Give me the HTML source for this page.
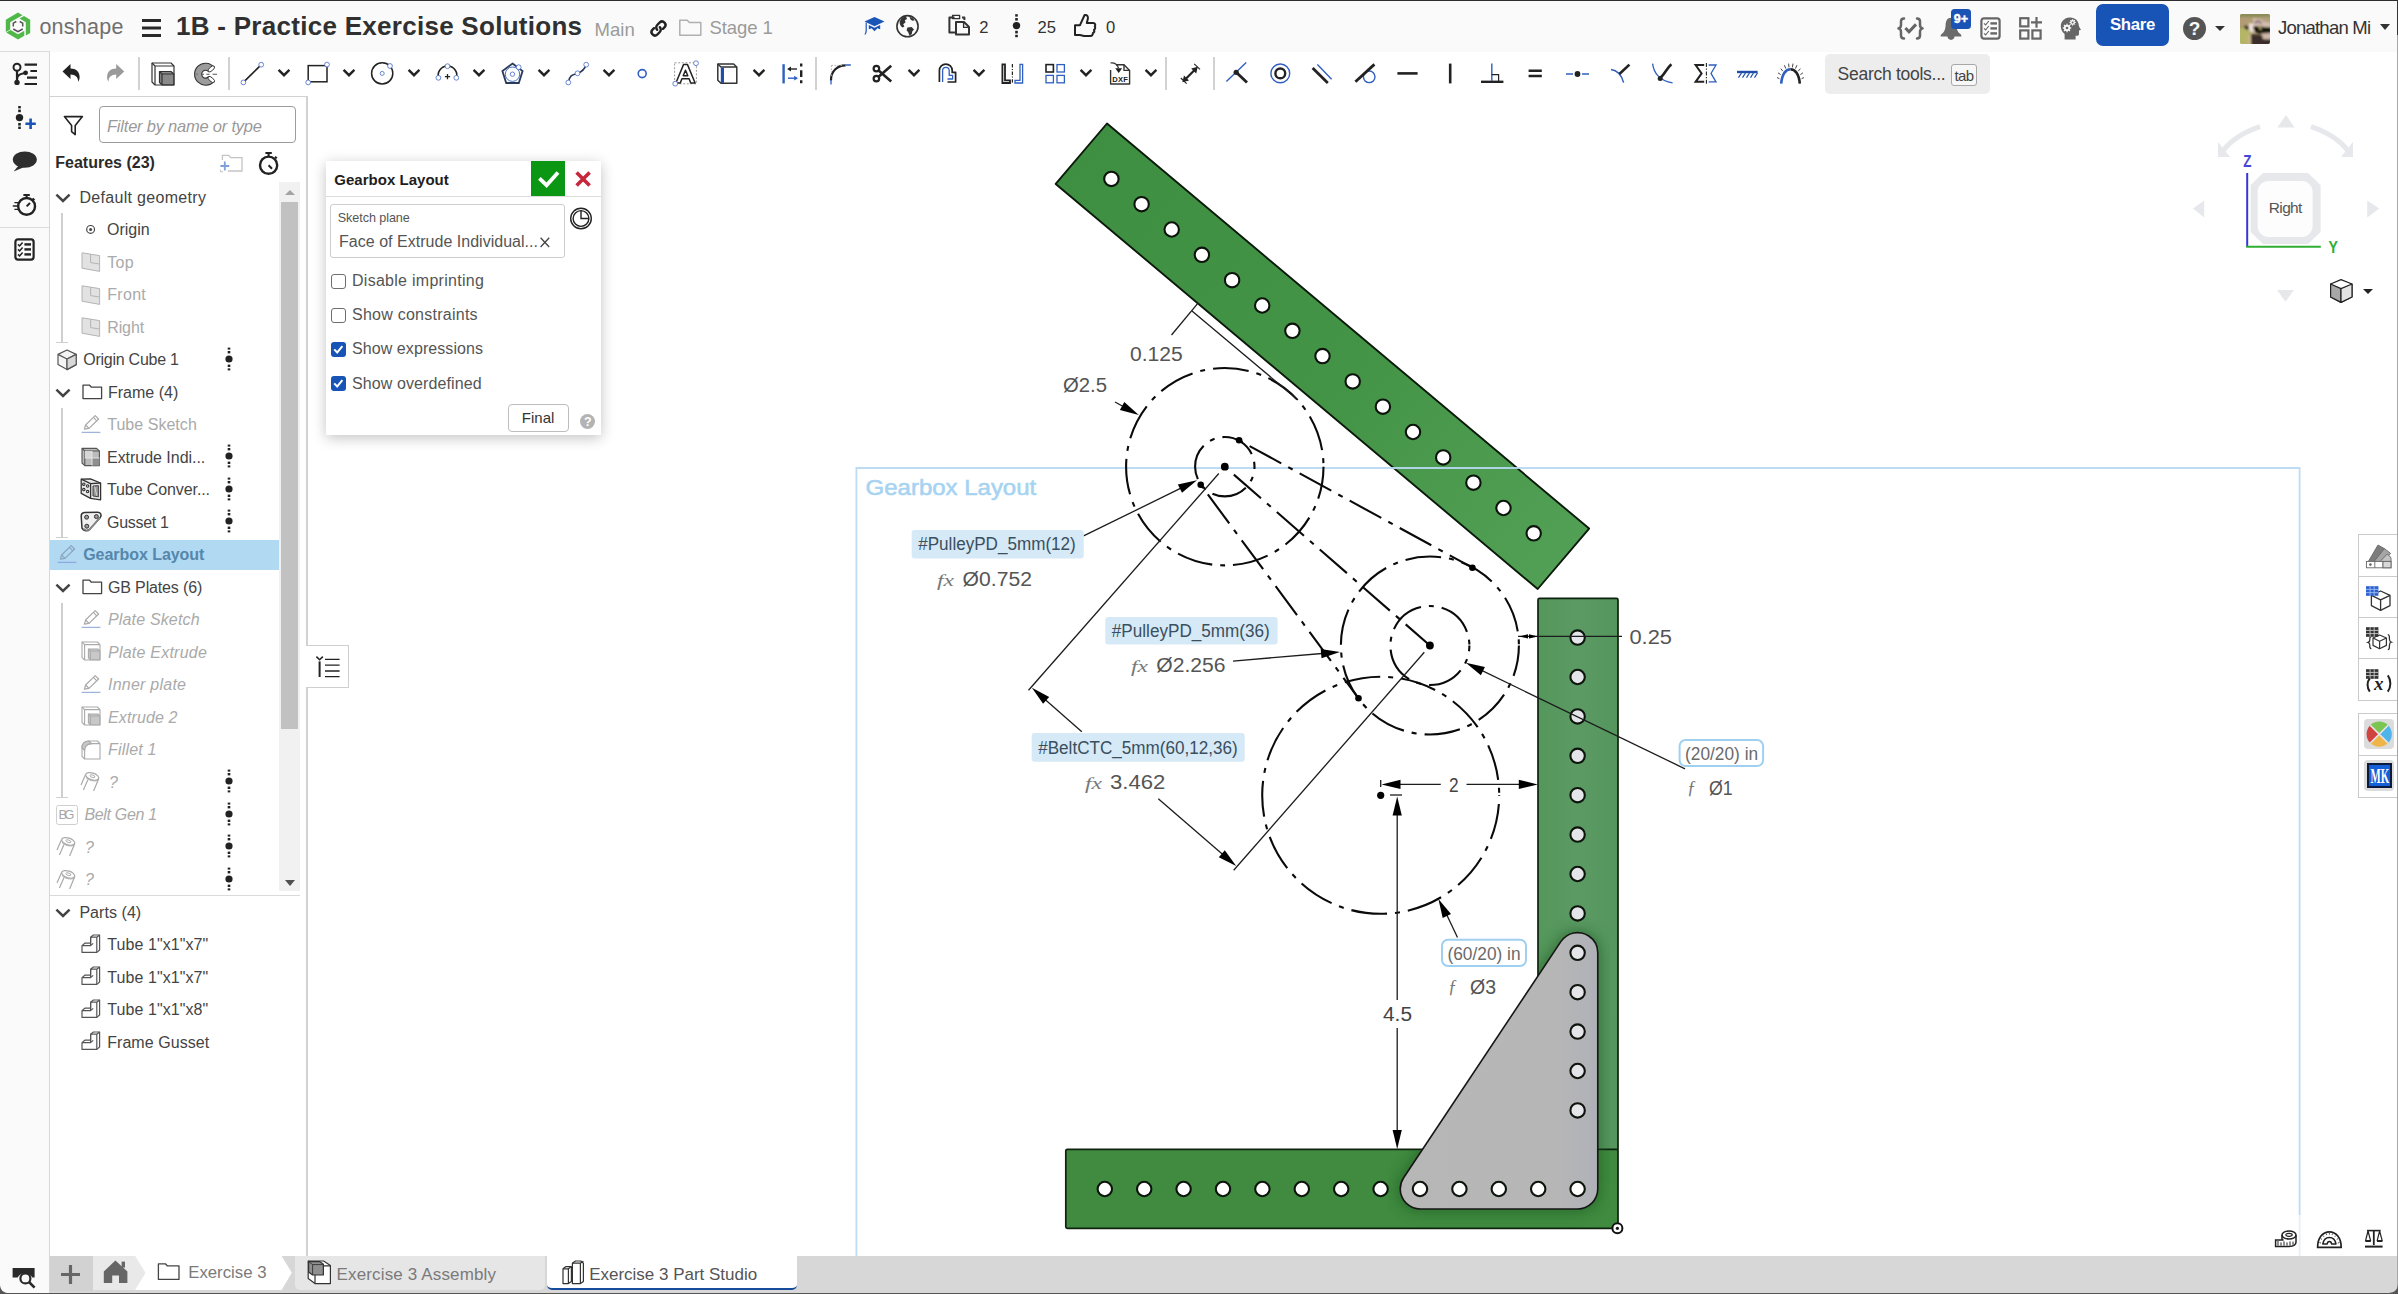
<!DOCTYPE html>
<html><head><meta charset="utf-8"><title>Onshape</title>
<style>
html,body{margin:0;padding:0;}
body{width:2398px;height:1294px;overflow:hidden;background:#fff;font-family:"Liberation Sans",sans-serif;position:relative;color:#444;}
#cv{position:absolute;left:0;top:0;z-index:0;}
.abs{position:absolute;}
svg{display:block;overflow:visible;}
.t{margin:0;padding:0;}
.fit{text-align:justify;text-align-last:justify;}

</style></head>
<body>
<svg id="cv" width="2398" height="1294" viewBox="0 0 2398 1294">
<defs>
<linearGradient id="gd" gradientUnits="userSpaceOnUse" x1="1080" y1="150" x2="1570" y2="560"><stop offset="0" stop-color="#3f8f42"/><stop offset="0.55" stop-color="#449447"/><stop offset="1" stop-color="#52a055"/></linearGradient>
<linearGradient id="gv" x1="0" y1="0" x2="1" y2="0"><stop offset="0" stop-color="#54975b"/><stop offset="0.5" stop-color="#5c9a64"/><stop offset="1" stop-color="#54965d"/></linearGradient>
<linearGradient id="gg" x1="0" y1="0" x2="1" y2="0"><stop offset="0" stop-color="#b7b7b7"/><stop offset="0.7" stop-color="#b5b5b7"/><stop offset="1" stop-color="#aeb0b6"/></linearGradient>
<linearGradient id="gg2" gradientUnits="userSpaceOnUse" x1="1400" y1="0" x2="1598" y2="0"><stop offset="0" stop-color="#b7b7b7"/><stop offset="0.8" stop-color="#b6b6b7"/><stop offset="1" stop-color="#b0b1b7"/></linearGradient>
<filter id="sh" x="-20%" y="-20%" width="140%" height="140%"><feGaussianBlur stdDeviation="7"/></filter>
</defs>
<polygon points="1107,123.5 1589.1,528.6 1537.7,589 1055.7,183.9" fill="url(#gd)" stroke="#0b1a0b" stroke-width="1.9" stroke-linejoin="round"/>
<circle cx="1111.4" cy="178.9" r="7.2" fill="#fff" stroke="#0c140c" stroke-width="2.1"/>
<circle cx="1141.6" cy="204.2" r="7.2" fill="#fff" stroke="#0c140c" stroke-width="2.1"/>
<circle cx="1171.7" cy="229.5" r="7.2" fill="#fff" stroke="#0c140c" stroke-width="2.1"/>
<circle cx="1201.9" cy="254.8" r="7.2" fill="#fff" stroke="#0c140c" stroke-width="2.1"/>
<circle cx="1232.1" cy="280.2" r="7.2" fill="#fff" stroke="#0c140c" stroke-width="2.1"/>
<circle cx="1262.2" cy="305.5" r="7.2" fill="#fff" stroke="#0c140c" stroke-width="2.1"/>
<circle cx="1292.4" cy="330.8" r="7.2" fill="#fff" stroke="#0c140c" stroke-width="2.1"/>
<circle cx="1322.5" cy="356.1" r="7.2" fill="#fff" stroke="#0c140c" stroke-width="2.1"/>
<circle cx="1352.7" cy="381.4" r="7.2" fill="#fff" stroke="#0c140c" stroke-width="2.1"/>
<circle cx="1382.9" cy="406.7" r="7.2" fill="#fff" stroke="#0c140c" stroke-width="2.1"/>
<circle cx="1413" cy="432" r="7.2" fill="#fff" stroke="#0c140c" stroke-width="2.1"/>
<circle cx="1443.2" cy="457.4" r="7.2" fill="#fff" stroke="#0c140c" stroke-width="2.1"/>
<circle cx="1473.4" cy="482.7" r="7.2" fill="#fff" stroke="#0c140c" stroke-width="2.1"/>
<circle cx="1503.5" cy="508" r="7.2" fill="#fff" stroke="#0c140c" stroke-width="2.1"/>
<circle cx="1533.7" cy="533.3" r="7.2" fill="#fff" stroke="#0c140c" stroke-width="2.1"/>
<rect x="1538" y="598.4" width="80" height="552" fill="url(#gv)" stroke="#0e220e" stroke-width="1.7" rx="1.5"/>
<rect x="1065.8" y="1149.3" width="552.2" height="79" fill="#408b40" stroke="#0e220e" stroke-width="1.7" rx="1.5"/>
<clipPath id="ct"><rect x="1539" y="599" width="78" height="551"/><rect x="1067" y="1150.3" width="550" height="77"/></clipPath>
<g clip-path="url(#ct)"><polygon points="1577.6,952.8 1577.6,1188.9 1420.4,1188.9" fill="#1f5a22" stroke="#1f5a22" stroke-width="46" stroke-linejoin="round" filter="url(#sh)" opacity="0.62"/></g>
<circle cx="1577.6" cy="637.6" r="7.2" fill="#e3e5e8" stroke="#0c140c" stroke-width="2.1"/>
<circle cx="1577.6" cy="677" r="7.2" fill="#e3e5e8" stroke="#0c140c" stroke-width="2.1"/>
<circle cx="1577.6" cy="716.4" r="7.2" fill="#e3e5e8" stroke="#0c140c" stroke-width="2.1"/>
<circle cx="1577.6" cy="755.8" r="7.2" fill="#e3e5e8" stroke="#0c140c" stroke-width="2.1"/>
<circle cx="1577.6" cy="795.2" r="7.2" fill="#e3e5e8" stroke="#0c140c" stroke-width="2.1"/>
<circle cx="1577.6" cy="834.6" r="7.2" fill="#e3e5e8" stroke="#0c140c" stroke-width="2.1"/>
<circle cx="1577.6" cy="874" r="7.2" fill="#e3e5e8" stroke="#0c140c" stroke-width="2.1"/>
<circle cx="1577.6" cy="913.4" r="7.2" fill="#e3e5e8" stroke="#0c140c" stroke-width="2.1"/>
<circle cx="1380.6" cy="1189" r="7.2" fill="#fff" stroke="#0c140c" stroke-width="2.1"/>
<circle cx="1341.2" cy="1189" r="7.2" fill="#fff" stroke="#0c140c" stroke-width="2.1"/>
<circle cx="1301.8" cy="1189" r="7.2" fill="#fff" stroke="#0c140c" stroke-width="2.1"/>
<circle cx="1262.4" cy="1189" r="7.2" fill="#fff" stroke="#0c140c" stroke-width="2.1"/>
<circle cx="1223" cy="1189" r="7.2" fill="#fff" stroke="#0c140c" stroke-width="2.1"/>
<circle cx="1183.6" cy="1189" r="7.2" fill="#fff" stroke="#0c140c" stroke-width="2.1"/>
<circle cx="1144.2" cy="1189" r="7.2" fill="#fff" stroke="#0c140c" stroke-width="2.1"/>
<circle cx="1104.8" cy="1189" r="7.2" fill="#fff" stroke="#0c140c" stroke-width="2.1"/>
<polygon points="1577.6,952.8 1577.6,1188.9 1420.4,1188.9" fill="#161616" stroke="#161616" stroke-width="41.9" stroke-linejoin="round"/>
<polygon points="1577.6,952.8 1577.6,1188.9 1420.4,1188.9" fill="url(#gg2)" stroke="url(#gg2)" stroke-width="38.7" stroke-linejoin="round"/>
<circle cx="1577.6" cy="952.8" r="7.2" fill="#e3e5e8" stroke="#0c140c" stroke-width="2.1"/>
<circle cx="1577.6" cy="992.2" r="7.2" fill="#e3e5e8" stroke="#0c140c" stroke-width="2.1"/>
<circle cx="1577.6" cy="1031.6" r="7.2" fill="#e3e5e8" stroke="#0c140c" stroke-width="2.1"/>
<circle cx="1577.6" cy="1071" r="7.2" fill="#e3e5e8" stroke="#0c140c" stroke-width="2.1"/>
<circle cx="1577.6" cy="1110.4" r="7.2" fill="#e3e5e8" stroke="#0c140c" stroke-width="2.1"/>
<circle cx="1577.6" cy="1189" r="7.2" fill="#fff" stroke="#0c140c" stroke-width="2.1"/>
<circle cx="1538.2" cy="1189" r="7.2" fill="#fff" stroke="#0c140c" stroke-width="2.1"/>
<circle cx="1498.8" cy="1189" r="7.2" fill="#fff" stroke="#0c140c" stroke-width="2.1"/>
<circle cx="1459.4" cy="1189" r="7.2" fill="#fff" stroke="#0c140c" stroke-width="2.1"/>
<circle cx="1420" cy="1189" r="7.2" fill="#fff" stroke="#0c140c" stroke-width="2.1"/>
<circle cx="1617.4" cy="1228.3" r="5" fill="#fff" stroke="#111" stroke-width="2"/><circle cx="1617.4" cy="1228.3" r="1.6" fill="#111"/>
<path d="M856.4,1256 V468 H2299.6 V1215" fill="none" stroke="#b7d9f2" stroke-width="1.8" opacity="0.92"/><path d="M2299.6,1215 V1256" fill="none" stroke="#b7d9f2" stroke-width="1.8" opacity="0.4"/>
<g fill="none" stroke="#0a0a0a" stroke-width="2.1" stroke-dasharray="36 8 5 8">
<circle cx="1224.8" cy="466.7" r="98.7" stroke-dashoffset="3.5"/>
<circle cx="1224.8" cy="466.7" r="29.7" stroke-dashoffset="33.7"/>
<circle cx="1429.9" cy="645.5" r="89" stroke-dashoffset="5"/>
<circle cx="1429.9" cy="645.5" r="39.5" stroke-dashoffset="30.2"/>
<circle cx="1380.7" cy="795.3" r="118.5" stroke-dashoffset="48.3"/>
<path d="M1239.1,440.3 L1472.4,567.7" stroke-dashoffset="45"/>
<path d="M1200.7,484.8 L1358.5,698.2" stroke-dashoffset="45"/>
<path d="M1224.8,466.7 L1429.9,645.5" stroke-dashoffset="45"/>
</g>
<g fill="#000">
<circle cx="1224.8" cy="466.7" r="3.9"/>
<circle cx="1429.9" cy="645.5" r="3.9"/>
<circle cx="1380.7" cy="795.3" r="3.6"/>
<circle cx="1239.1" cy="440.3" r="3.3"/>
<circle cx="1200.7" cy="484.8" r="3.3"/>
<circle cx="1472.4" cy="567.7" r="3.3"/>
<circle cx="1358.5" cy="698.2" r="3.3"/>
</g>
<g fill="none" stroke="#1c1c1c" stroke-width="1.3">
<path d="M1198,303.2 L1171.5,335"/>
<path d="M1192,311 L1298,400"/>
<path d="M1115,402 L1130,410.2"/>
<path d="M1083.6,535.9 L1185,486.2"/>
<path d="M1218.8,473.5 L1028.5,690.3"/>
<path d="M1424.3,652.3 L1233.7,870.3"/>
<path d="M1081.8,731.7 L1040,695"/>
<path d="M1158.3,798.8 L1228,859"/>
<path d="M1233,661.1 L1328,653"/>
<path d="M1518,636.4 L1622,636.4"/>
<path d="M1685,768.8 L1477,668.2"/>
<path d="M1395,784.4 L1440.8,784.4"/>
<path d="M1466.5,784.4 L1525,784.4"/>
<path d="M1380.7,780 L1380.7,787"/>
<path d="M1397.2,810 L1397.2,1000"/>
<path d="M1397.2,1028 L1397.2,1136"/>
<path d="M1390,795 L1402,795"/>
<path d="M1457.5,937.5 L1444,909"/>
</g>
<g fill="#000">
<polygon points="1138.8,415 1119.9,409.9 1124.3,401.9"/>
<polygon points="1197,480.3 1182,492.8 1177.9,484.5"/>
<polygon points="1031.9,687.8 1049.2,696.9 1043.1,703.8"/>
<polygon points="1236.2,866.1 1218.8,857.2 1224.8,850.2"/>
<polygon points="1340,652 1321.5,658.2 1320.7,649"/>
<polygon points="1465.8,662.8 1484.9,666.9 1480.9,675.2"/>
<polygon points="1381.5,784.4 1400.5,779.8 1400.5,789"/>
<polygon points="1537.8,784.4 1518.8,789 1518.8,779.8"/>
<polygon points="1397.2,796.5 1401.8,815.5 1392.6,815.5"/>
<polygon points="1397.2,1149 1392.6,1130 1401.8,1130"/>
<polygon points="1438.4,899 1451,914 1442.7,918.1"/>
<polygon points="1519,636.4 1528,634.2 1528,638.6"/>
<polygon points="1538,636.4 1529,638.6 1529,634.2"/>
</g>
<g font-family="Liberation Sans, sans-serif">
<rect x="911.7" y="530" width="172" height="28.4" rx="3" fill="#d6e9f6"/>
<text x="918.2" y="550.4" font-size="17.5" fill="#3a4f60" textLength="157.6" lengthAdjust="spacingAndGlyphs">#PulleyPD_5mm(12)</text>
<rect x="1105.3" y="616.9" width="172.3" height="27.5" rx="3" fill="#d6e9f6"/>
<text x="1111.8" y="636.9" font-size="17.5" fill="#3a4f60" textLength="158" lengthAdjust="spacingAndGlyphs">#PulleyPD_5mm(36)</text>
<rect x="1031.7" y="733" width="213" height="28.8" rx="3" fill="#d6e9f6"/>
<text x="1038.2" y="753.6" font-size="17.5" fill="#3a4f60" textLength="199.4" lengthAdjust="spacingAndGlyphs">#BeltCTC_5mm(60,12,36)</text>
<rect x="1679.6" y="740" width="83.5" height="26.1" rx="6" fill="#fff" stroke="#9fd0f0" stroke-width="2"/>
<text x="1685.1" y="759.6" font-size="18.5" fill="#6a6a6a" textLength="73" lengthAdjust="spacingAndGlyphs">(20/20) in</text>
<rect x="1442" y="939.8" width="84" height="26.2" rx="6" fill="#fff" stroke="#9fd0f0" stroke-width="2"/>
<text x="1447.5" y="959.5" font-size="18.5" fill="#6a6a6a" textLength="73" lengthAdjust="spacingAndGlyphs">(60/20) in</text>
<text x="1130" y="360.7" font-size="20.5" fill="#555" textLength="52.7" lengthAdjust="spacingAndGlyphs">0.125</text>
<text x="1063" y="392" font-size="20.5" fill="#555" textLength="44" lengthAdjust="spacingAndGlyphs">&#216;2.5</text>
<text x="937" y="586" font-size="17" font-style="italic" font-family="Liberation Serif, serif" fill="#777" textLength="17" lengthAdjust="spacingAndGlyphs">fx</text>
<text x="962.6" y="586" font-size="20.5" fill="#555" textLength="69.3" lengthAdjust="spacingAndGlyphs">&#216;0.752</text>
<text x="1131" y="672" font-size="17" font-style="italic" font-family="Liberation Serif, serif" fill="#777" textLength="17" lengthAdjust="spacingAndGlyphs">fx</text>
<text x="1156.3" y="672" font-size="20.5" fill="#555" textLength="69.2" lengthAdjust="spacingAndGlyphs">&#216;2.256</text>
<text x="1085" y="788.5" font-size="17" font-style="italic" font-family="Liberation Serif, serif" fill="#777" textLength="17" lengthAdjust="spacingAndGlyphs">fx</text>
<text x="1110" y="788.5" font-size="20.5" fill="#555" textLength="55.3" lengthAdjust="spacingAndGlyphs">3.462</text>
<text x="1629.4" y="644.2" font-size="20.5" fill="#555" textLength="42.6" lengthAdjust="spacingAndGlyphs">0.25</text>
<text x="1687" y="794" font-size="18" font-style="italic" font-family="Liberation Serif, serif" fill="#777">&#402;</text>
<text x="1709" y="795" font-size="20.5" fill="#555" textLength="23.7" lengthAdjust="spacingAndGlyphs">&#216;1</text>
<text x="1448" y="993" font-size="18" font-style="italic" font-family="Liberation Serif, serif" fill="#777">&#402;</text>
<text x="1470" y="994" font-size="20.5" fill="#555" textLength="26" lengthAdjust="spacingAndGlyphs">&#216;3</text>
<text x="1449" y="792" font-size="20.5" fill="#444" textLength="9.6" lengthAdjust="spacingAndGlyphs">2</text>
<text x="1383" y="1020.6" font-size="20.5" fill="#444" textLength="29" lengthAdjust="spacingAndGlyphs">4.5</text>
<text x="865.6" y="495" font-size="21.6" fill="#a6d3f1" stroke="#a6d3f1" stroke-width="0.55" textLength="170.6" lengthAdjust="spacingAndGlyphs">Gearbox Layout</text>
</g>
</svg>
<div class="abs" style="left:0;top:0;width:2398px;height:52px;background:#fafafa;"></div>
<svg class="abs" style="left:5px;top:12px" width="26" height="28" viewBox="0 0 26 28" ><g fill="#4fb848"><polygon points="13,0.6 17.5,3.2 5.2,10.3 5.2,17.5 0.8,20 0.8,7.7"/><polygon points="25.2,7.7 25.2,21 20.8,23.5 20.8,10.2 14.5,6.6 19,4.1"/><polygon points="13,27.4 1.2,20.6 5.6,18.1 13,22.3 19.3,18.7 19.3,23.8"/></g><g fill="none" stroke="#555" stroke-width="1.5"><path d="M8.3,14.5V11.2L11.3,9.5"/><path d="M14.7,9.5L17.7,11.2V14.5"/><path d="M17.7,17L13,19.7L8.3,17" stroke="#5a4a60"/></g></svg>
<div class="abs t " style="left:39.4px;top:14.85px;font-size:21.5px;line-height:24.70px;color:#707070;font-weight:normal;white-space:nowrap;letter-spacing:0.252px;">onshape</div>
<div class="abs" style="left:141.6px;top:18.8px;width:19.8px;height:3.5px;background:#2a2a2a;box-shadow:0 7.5px 0 #2a2a2a,0 15px 0 #2a2a2a"></div>
<div class="abs t " style="left:176px;top:12.10px;font-size:26px;line-height:29.87px;color:#303030;font-weight:bold;white-space:nowrap;letter-spacing:0.279px;">1B - Practice Exercise Solutions</div>
<div class="abs t " style="left:594.5px;top:19.21px;font-size:18.5px;line-height:21.26px;color:#9a9a9a;font-weight:normal;white-space:nowrap;letter-spacing:0.068px;">Main</div>
<svg class="abs" style="left:649px;top:19px" width="19" height="19" viewBox="0 0 19 19" ><g fill="none" stroke="#222" stroke-width="2.4" stroke-linecap="round"><path d="M8.2,10.8 a3.4,3.4 0 0 1 0,-4.8 l2.6,-2.6 a3.4,3.4 0 0 1 4.8,4.8 l-1.6,1.6"/><path d="M10.8,8.2 a3.4,3.4 0 0 1 0,4.8 l-2.6,2.6 a3.4,3.4 0 0 1 -4.8,-4.8 l1.6,-1.6"/></g></svg>
<svg class="abs" style="left:678px;top:18px" width="25" height="19" viewBox="0 0 25 19" ><path d="M1.8,2.2 H9.2 L11.4,4.6 H22.8 V17.2 H1.8 Z" fill="none" stroke="#b0b0b0" stroke-width="1.5" stroke-linejoin="round"/></svg>
<div class="abs t " style="left:709.4px;top:17.01px;font-size:18.5px;line-height:21.26px;color:#9a9a9a;font-weight:normal;white-space:nowrap;letter-spacing:-0.078px;">Stage 1</div>
<svg class="abs" style="left:864px;top:16px" width="21" height="20" viewBox="0 0 21 20" ><g fill="#1a55b8"><polygon points="10.5,1 20.5,5.6 10.5,10.2 0.5,5.6"/><path d="M4.8,9 L10.5,11.7 L16.2,9 V13.3 L13.4,12.2 L10.5,15.2 L7.6,12.2 L4.8,13.3 Z"/><path d="M1.6,6.5 h1.2 v8 c0,1.5 -0.4,3 -1.4,4 h-1 c0.8,-1.3 1.2,-2.6 1.2,-4 z"/></g></svg>
<svg class="abs" style="left:895px;top:14px" width="25" height="25" viewBox="0 0 25 25" ><circle cx="12.5" cy="12.2" r="10.6" fill="none" stroke="#333" stroke-width="1.6"/><path d="M6.5,4.2 C8,3 9.5,2.6 11,2.4 L12,5 L9.8,6.2 L10.6,8.2 L8.2,10.2 L9.4,12.4 L7.6,13.4 C5.6,12.6 4.4,10 4.6,7.6 Z M12.4,13.4 L16.6,13 L19,15.6 L17.2,17.6 L16.8,20.2 L14.4,21.6 L13.2,18.2 L11.6,16.2 Z M14.5,2.8 C16.5,3.2 18.5,4.6 19.8,6.2 L17.2,6.8 L15.4,5.2 Z" fill="#333"/></svg>
<svg class="abs" style="left:947px;top:14px" width="24" height="22" viewBox="0 0 24 22" ><g fill="none" stroke="#333" stroke-width="2" stroke-linejoin="round"><path d="M7.5,3.4 H2.4 V18.4 H8"/><path d="M5.6,1.4 H12.6 V4.6 H5.6 Z" stroke-width="1.4"/><path d="M15,3.4 H17.4 V6"/><path d="M9,8 H17 L22,13 V20.6 H9 Z"/><path d="M16.6,8.4 V13.4 H21.6" stroke-width="1.4"/></g></svg>
<div class="abs t " style="left:979.3px;top:18.26px;font-size:16.6px;line-height:19.07px;color:#333;font-weight:normal;white-space:nowrap;">2</div>
<svg class="abs" style="left:1011px;top:13px" width="11" height="26" viewBox="0 0 11 26" ><g fill="#222"><rect x="4.2" y="1.2" width="2.6" height="2.4"/><rect x="4.2" y="5" width="2.6" height="2.6"/><circle cx="5.5" cy="12.6" r="3.7"/><rect x="4.2" y="17.8" width="2.6" height="2.6"/><rect x="4.2" y="21.8" width="2.6" height="2.4"/></g></svg>
<div class="abs t " style="left:1037.6px;top:18.26px;font-size:16.6px;line-height:19.07px;color:#333;font-weight:normal;white-space:nowrap;">25</div>
<svg class="abs" style="left:1073px;top:13px" width="24" height="25" viewBox="0 0 24 25" ><path d="M2,12.2 H7 L11.6,2 C14.4,1.6 15.4,3.6 14.8,6 L13.8,10 H20.2 C22.2,10 22.8,12 21.8,13.4 C22.6,14.6 22.2,16.2 21,16.9 C21.6,18.2 21,19.6 19.8,20.2 C20,22 19,23 17.2,23 H11 L7,22 H2 Z" fill="none" stroke="#222" stroke-width="2" stroke-linejoin="round"/></svg>
<div class="abs t " style="left:1106px;top:18.26px;font-size:16.6px;line-height:19.07px;color:#333;font-weight:normal;white-space:nowrap;">0</div>
<svg class="abs" style="left:1896px;top:16px" width="29" height="25" viewBox="0 0 29 25" ><g fill="none" stroke="#666" stroke-width="2.5" stroke-linecap="round" stroke-linejoin="round"><path d="M8,2.4 C5.4,2.4 5,3.6 5,5.4 V9 C5,11 4,12 2.4,12.4 C4,12.8 5,13.8 5,15.8 V19.4 C5,21.2 5.4,22.4 8,22.4"/><path d="M21,2.4 C23.6,2.4 24,3.6 24,5.4 V9 C24,11 25,12 26.6,12.4 C25,12.8 24,13.8 24,15.8 V19.4 C24,21.2 23.6,22.4 21,22.4"/><path d="M9.4,12 L13,15.8 L20,8.4" stroke-width="3" stroke-linecap="butt" stroke-linejoin="miter"/></g></svg>
<svg class="abs" style="left:1939px;top:16px" width="24" height="25" viewBox="0 0 24 25" ><path d="M12,1.8 C15.8,1.8 17.2,5 17.4,9 C17.6,13.6 18.6,15.8 21,17.8 C22,18.6 22.6,19.4 22.4,20.6 H15.6 C15.2,22.8 13.8,23.9 12,23.9 C10.2,23.9 8.8,22.8 8.4,20.6 H1.6 C1.4,19.4 2,18.6 3,17.8 C5.4,15.8 6.4,13.6 6.6,9 C6.8,5 8.2,1.8 12,1.8 Z" fill="#6b6b6b"/></svg>
<div class="abs" style="left:1951px;top:9px;width:20px;height:20px;background:#1a53b5;border-radius:3.5px;color:#fff;font-weight:bold;font-size:12.5px;line-height:20px;text-align:center;letter-spacing:0px;-webkit-text-stroke:0.45px #fff">9+</div>
<svg class="abs" style="left:1979px;top:16px" width="23" height="25" viewBox="0 0 23 25" ><rect x="2.4" y="2.4" width="18.2" height="20.2" rx="2.5" fill="none" stroke="#666" stroke-width="2.2"/><g fill="none" stroke="#666" stroke-width="1.15"><path d="M5,7.4 L6.6,9 L9.8,5"/><path d="M5,12.4 L6.6,14 L9.8,10"/><path d="M5,17.4 L6.6,19 L9.8,15"/></g><g fill="#666"><rect x="11.4" y="6.2" width="6.6" height="2.4"/><rect x="11.4" y="11.2" width="6.6" height="2.4"/><rect x="11.4" y="16.2" width="6.6" height="2.4"/></g></svg>
<svg class="abs" style="left:2018px;top:16px" width="25" height="25" viewBox="0 0 25 25" ><g fill="none" stroke="#666" stroke-width="2.2"><rect x="2.2" y="2.2" width="8.2" height="8.2"/><rect x="2.2" y="14.4" width="8.2" height="8.2"/><rect x="14.4" y="14.4" width="8.2" height="8.2"/><path d="M18.5,1 V11.8 M13,6.4 H24"/></g></svg>
<svg class="abs" style="left:2059px;top:16px" width="24" height="25" viewBox="0 0 24 25" ><path d="M10.4,1.6 C16,1.2 19.8,5 19.8,9.6 C19.8,10.4 21,12.4 22,13.8 L20,14.6 V18 C20,19.2 19.2,19.8 18,19.8 H16.6 V23.6 H5.6 V18 C3.4,16.2 1.8,13.6 1.8,10.2 C1.8,5.6 5.4,2 10.4,1.6 Z" fill="#666"/><g fill="#fafafa"><circle cx="8" cy="12" r="3.1"/><circle cx="13.6" cy="6.4" r="2.4"/></g><g fill="#666"><circle cx="8" cy="12" r="1.2"/><circle cx="13.6" cy="6.4" r="0.9"/></g><g stroke="#fafafa" stroke-width="1.3"><path d="M8,7.8V16.2M3.8,12H12.2M5,9L11,15M11,9L5,15"/><path d="M13.6,3.2V9.6M10.4,6.4H16.8M11.3,4.1L15.9,8.7M15.9,4.1L11.3,8.7" stroke-width="1"/></g><g fill="#666"><circle cx="8" cy="12" r="1.3"/><circle cx="13.6" cy="6.4" r="1"/></g></svg>
<div class="abs" style="left:2096px;top:4px;width:73px;height:42px;background:#1853b6;border-radius:7px;color:#fff;font-weight:bold;font-size:16.8px;line-height:42px;text-align:center;letter-spacing:-0.3px">Share</div>
<div class="abs" style="left:2183px;top:17px;width:23px;height:23px;background:#555;border-radius:50%;color:#fafafa;font-weight:bold;font-size:19px;line-height:24px;text-align:center">?</div>
<div class="abs" style="left:2215px;top:26px;border:5px solid transparent;border-top:5.5px solid #333;"></div>
<svg class="abs" style="left:2240px;top:14px" width="30" height="30" viewBox="0 0 30 30"><defs><clipPath id="av"><rect width="30" height="30" rx="2"/></clipPath><filter id="avb" x="-30%" y="-30%" width="160%" height="160%"><feGaussianBlur stdDeviation="1.1"/></filter></defs><g clip-path="url(#av)"><rect width="30" height="30" fill="#a89a6c"/><g filter="url(#avb)"><rect x="-2" y="-2" width="34" height="5" fill="#8c8c58"/><rect x="-2" y="3" width="12" height="9" fill="#b39c74"/><rect x="-3" y="14" width="13" height="18" fill="#b5b568"/><path d="M12,4 L31,6 V14 L14,12 Z" fill="#d2bcae"/><path d="M20,3 L31,3 V9 L22,7Z" fill="#b0a07c"/><path d="M15.5,9.5 C16,6.5 20,6.5 21,10" fill="none" stroke="#6a5068" stroke-width="1.6"/><path d="M9,9 L14,10 L15,17 L12,19 L9,16 Z" fill="#efe0d8"/><path d="M4,11.5 L8.5,12 L9,16 L5,15Z" fill="#2a2018"/><path d="M13,12 L31,13.5 V19.5 L20,20 L14,17 Z" fill="#17120f"/><path d="M18,11 L22,15 L20,16 Z" fill="#c8c070"/><path d="M21,19.5 L31,19 V25.5 L23,25 Z" fill="#d0b8aa"/><path d="M11,20 L22,21 L23,25 L31,25.5 V32 H10 Z" fill="#3a2f29"/><path d="M8,22 L11,20 L11,31 L8,31Z" fill="#c8b488"/></g></g></svg>
<div class="abs t " style="left:2278px;top:16.61px;font-size:18.5px;line-height:21.26px;color:#333;font-weight:normal;white-space:nowrap;letter-spacing:-0.778px;">Jonathan Mi</div>
<div class="abs" style="left:2380px;top:24px;border:5.5px solid transparent;border-top:6px solid #333;"></div>
<div class="abs" style="left:0;top:0;width:2398px;height:1.3px;background:#2e2e2e;z-index:50"></div>
<div class="abs" style="left:2397px;top:0;width:1px;height:35px;background:#333;z-index:50"></div>
<div class="abs" style="left:2397px;top:35px;width:1px;height:1259px;background:#a8a8a8;z-index:50"></div>
<div class="abs" style="left:50px;top:52px;width:2348px;height:45px;background:#fff"></div>
<svg class="abs" style="left:0;top:52px" width="2398" height="45" viewBox="0 52 2398 45"><path d="M62.5,71.5 L70.5,64 V68.6 C76,68.6 79.6,72 79.6,77 C79.6,79 79,80.6 78.2,81.8 C78.2,77.6 75.6,74.6 70.5,74.6 V79 Z" fill="#222"/><path d="M124.2,71.5 L116.2,64 V68.6 C110.7,68.6 107.1,72 107.1,77 C107.1,79 107.7,80.6 108.5,81.8 C108.5,77.6 111.1,74.6 116.2,74.6 V79 Z" fill="#9a9a9a"/><g stroke="#333" stroke-width="1.2" fill="none" stroke-linejoin="round"><path d="M152,63 H171 L174,66 V85 H155 L152,82 Z" fill="#fff"/><path d="M152,63 L155,66 H174 M155,66 V85"/><path d="M159.5,71.5 H171 L173.8,74 V84.8 H162 L159.5,82.5 Z" fill="#8a8a8a"/><path d="M159.5,71.5 L162,74 H173.8 M162,74 V84.8"/></g><g><path d="M214.0,67.1 A11,11 0 1 0 214.0,81.3 L208.6,76.7 A3.9,3.9 0 1 1 208.6,71.7 Z" fill="#9c9c9c" stroke="#333" stroke-width="1.1" stroke-linejoin="round"/><ellipse cx="211.3" cy="68.9" rx="4" ry="1.9" transform="rotate(-42 211.3 68.9)" fill="#fff" stroke="#333" stroke-width="0.9"/><ellipse cx="211.3" cy="79.5" rx="4" ry="1.9" transform="rotate(42 211.3 79.5)" fill="#fff" stroke="#333" stroke-width="0.9"/><path d="M196.4,74.2 H197.6 M201.4,74.2 H204 M206.4,74.2 H209.6 M212.6,74.2 H217" stroke="#555" stroke-width="1.1"/></g><path d="M243.6,82.2 L261,64.9" stroke="#222" stroke-width="1.7"/><circle cx="243.4" cy="82.4" r="2.4" fill="#fff" stroke="#5273cc" stroke-width="0.85"/><circle cx="261.2" cy="64.7" r="2.4" fill="#fff" stroke="#5273cc" stroke-width="0.85"/><rect x="308.2" y="65.6" width="18.8" height="16.2" fill="none" stroke="#222" stroke-width="1.5"/><circle cx="327" cy="64.6" r="2.4" fill="#fff" stroke="#5273cc" stroke-width="0.85"/><circle cx="308.2" cy="82.4" r="2.4" fill="#fff" stroke="#5273cc" stroke-width="0.85"/><circle cx="382.2" cy="73.4" r="10.6" fill="none" stroke="#222" stroke-width="1.5"/><circle cx="382.2" cy="73.4" r="2" fill="#fff" stroke="#5273cc" stroke-width="0.85"/><circle cx="390" cy="66" r="2.4" fill="#fff" stroke="#5273cc" stroke-width="0.85"/><path d="M438.8,78.6 A9.3,9.3 0 1 1 456.2,78.6" fill="none" stroke="#222" stroke-width="1.6"/><path d="M444.9,76.6 H450.1 M447.5,74 V79.2" stroke="#222" stroke-width="1.3"/><circle cx="438.4" cy="77.8" r="2.4" fill="#fff" stroke="#5273cc" stroke-width="0.85"/><circle cx="447.5" cy="66.2" r="2.4" fill="#fff" stroke="#5273cc" stroke-width="0.85"/><circle cx="456.3" cy="77.8" r="2.4" fill="#fff" stroke="#5273cc" stroke-width="0.85"/><polygon points="512.5,63.6 522.6,71 518.8,83 506.2,83 502.4,71" fill="none" stroke="#2a3a5a" stroke-width="1.8"/><circle cx="512.5" cy="74.2" r="7.2" fill="none" stroke="#2f5fc0" stroke-width="0.9"/><circle cx="512.5" cy="74.2" r="2.2" fill="#fff" stroke="#5273cc" stroke-width="0.85"/><circle cx="518.7" cy="67.2" r="2.4" fill="#fff" stroke="#5273cc" stroke-width="0.85"/><path d="M568.4,82.4 C569.5,74 574,74.6 577.5,73.4 C581.5,72 584.5,70 586.1,64.8" fill="none" stroke="#2a3a5a" stroke-width="1.6"/><circle cx="568.3" cy="82.5" r="2.4" fill="#fff" stroke="#5273cc" stroke-width="0.85"/><circle cx="577.5" cy="73.3" r="2.4" fill="#fff" stroke="#5273cc" stroke-width="0.85"/><circle cx="586.2" cy="64.7" r="2.4" fill="#fff" stroke="#5273cc" stroke-width="0.85"/><circle cx="642.2" cy="73.6" r="4" fill="#fff" stroke="#2f5fc0" stroke-width="1.6"/><rect x="674.6" y="62.8" width="21.8" height="21" fill="none" stroke="#9a9a9a" stroke-width="1" stroke-dasharray="2 1.6"/><path d="M683.5,64.6 h4 l7.6,18.4 h-4.4 l-1.6,-4.2 h-7.2 l-1.6,4.2 h-4.4 z M685.5,70.2 l2.3,5.6 h-4.6 z" fill="#fff" fill-rule="evenodd" stroke="#222" stroke-width="1.5" stroke-linejoin="round"/><circle cx="696" cy="63.2" r="2.4" fill="#fff" stroke="#5273cc" stroke-width="0.85"/><circle cx="675.2" cy="83.7" r="2.4" fill="#fff" stroke="#5273cc" stroke-width="0.85"/><g fill="none" stroke="#333" stroke-width="1.5" stroke-linejoin="round"><path d="M717.8,64 H733.6 L736.8,67 V83.2 H721 L717.8,80.2 Z"/><path d="M717.8,64 L721,67 H736.8"/></g><path d="M722.4,67.6 V83" stroke="#1f4fa8" stroke-width="3.2"/><path d="M783.6,64.2 V83.4" stroke="#2f5fc0" stroke-width="2.4"/><path d="M801.2,63.6 V83.4" stroke="#222" stroke-width="2.4" stroke-dasharray="3 3.6 6.8 3.2 3 10"/><path d="M788.5,69 H797" stroke="#222" stroke-width="1.4"/><polygon points="787.2,69 791,66.6 791,71.4" fill="#222"/><path d="M788,78.2 H796.5" stroke="#2f5fc0" stroke-width="1.4"/><polygon points="798,78.2 794.2,75.8 794.2,80.6" fill="#2f5fc0"/><path d="M831,80.4 V80 C831,71.5 837,65.4 845.6,65.4" fill="none" stroke="#222" stroke-width="2.2"/><path d="M831,84.6 V80 M845.5,65 H850.8" stroke="#2f5fc0" stroke-width="1.3"/><path d="M831.4,65.4 H842 M831.4,65.4 V76" stroke="#aaa" stroke-width="0.9" stroke-dasharray="1.6 1.4" fill="none"/><g fill="none" stroke="#222" stroke-width="2.2"><circle cx="876.4" cy="68.6" r="2.8"/><circle cx="876.4" cy="78.6" r="2.8"/><path d="M878.6,70.4 L891.2,81.4 M878.6,76.8 L891.2,65.8" stroke-width="2.6"/></g><g fill="none" stroke-linejoin="round"><path d="M939.4,82 V70.5 A6.4,6.4 0 0 1 952.2,70.5 V72.4 H955.6 V82 H947.5" stroke="#222" stroke-width="1.7"/><path d="M942.6,82 V70.6 A3.3,3.3 0 0 1 949.2,70.6 V75.4 H952.6 V79 H947.5" stroke="#2f5fc0" stroke-width="1.3"/></g><path d="M1002.4,64.4 H1005 V80.4 H1010 V83 H1002.4 Z" fill="none" stroke="#222" stroke-width="1.8"/><path d="M1012.4,64 V84" stroke="#222" stroke-width="1.2" stroke-dasharray="3.4 1.6 1 1.6"/><path d="M1022.6,64.4 H1020 V80.4 H1015 V83 H1022.6 Z" fill="none" stroke="#2f5fc0" stroke-width="1.3"/><rect x="1046" y="64.6" width="7.4" height="7.4" fill="none" stroke="#222" stroke-width="1.6"/><g fill="none" stroke="#2f5fc0" stroke-width="1.3"><rect x="1057" y="64.6" width="7.4" height="7.4"/><rect x="1046" y="75.4" width="7.4" height="7.4"/><rect x="1057" y="75.4" width="7.4" height="7.4"/></g><g fill="none" stroke="#333" stroke-width="1.4" stroke-linejoin="round"><path d="M1116,64.8 H1124 L1129.6,70.4 V84 H1110.6 V70"/><path d="M1124,64.8 V70.4 H1129.6"/><path d="M1110.5,63 C1114.5,62.6 1117.4,64.5 1118.6,68.5" stroke-width="1.2"/></g><polygon points="1115.2,68.2 1122.2,68.2 1118.7,73" fill="#222"/><text x="1120.2" y="82.4" text-anchor="middle" font-family="Liberation Sans, sans-serif" font-weight="bold" font-size="7.6" fill="#222" letter-spacing="0.2">DXF</text><path d="M1184.6,80 L1195.6,69" stroke="#222" stroke-width="2.2"/><polygon points="1182.4,82.2 1184,75.6 1189,80.6" fill="#222"/><polygon points="1197.8,66.8 1196.2,73.4 1191.2,68.4" fill="#222"/><path d="M1180.8,78 L1186.6,83.6 M1194.2,63.8 L1200,69.4" stroke="#222" stroke-width="1.1"/><path d="M1226.4,81.6 L1246.2,62.6" stroke="#2f5fc0" stroke-width="1.4"/><path d="M1237,73 L1247,82.6" stroke="#222" stroke-width="2.8"/><circle cx="1236.2" cy="72.3" r="2.6" fill="#222"/><circle cx="1280.3" cy="73.4" r="9.4" fill="none" stroke="#2f5fc0" stroke-width="1.4"/><circle cx="1280.3" cy="73.4" r="4.9" fill="none" stroke="#222" stroke-width="2.4"/><path d="M1312.6,68 L1327.8,83" stroke="#222" stroke-width="2.8"/><path d="M1317.4,64.4 L1331.6,79.2" stroke="#2f5fc0" stroke-width="1.4"/><circle cx="1369.2" cy="76.8" r="5.8" fill="none" stroke="#2f5fc0" stroke-width="1.4"/><path d="M1355.4,81.8 L1374.4,64.4" stroke="#222" stroke-width="2.8"/><path d="M1397.4,73.4 H1417.6" stroke="#222" stroke-width="2.6"/><path d="M1450.2,63.6 V83.4" stroke="#222" stroke-width="2.6"/><path d="M1481,81.8 H1503.4" stroke="#222" stroke-width="2.4"/><path d="M1491.8,63.6 V81" stroke="#2f5fc0" stroke-width="1.4"/><path d="M1491.8,74.6 H1498.6 V81" fill="none" stroke="#222" stroke-width="1.2"/><path d="M1528.6,70.8 H1541.8 M1528.6,76 H1541.8" stroke="#222" stroke-width="2.4"/><path d="M1566,74 H1573 M1582,74 H1589" stroke="#2f5fc0" stroke-width="1.5"/><circle cx="1577.5" cy="74" r="2.9" fill="#222"/><path d="M1611,69.6 C1616,70.2 1621,73.6 1623.6,82.6" fill="none" stroke="#2f5fc0" stroke-width="1.5"/><path d="M1619.4,74 L1629.4,64.6" stroke="#222" stroke-width="2.6"/><path d="M1652.6,63.6 C1653.6,72 1659,81 1672.6,82.8" fill="none" stroke="#2f5fc0" stroke-width="1.3"/><path d="M1660.6,77.6 C1665,74 1666,69 1671.4,64.2" fill="none" stroke="#222" stroke-width="2.6"/><circle cx="1660.2" cy="78.6" r="2.5" fill="#222"/><path d="M1704.2,65 H1695.6 L1701.6,73.4 L1695.6,81.8 H1704.2" fill="none" stroke="#222" stroke-width="2" stroke-linejoin="miter"/><path d="M1706.4,63 V84.4" stroke="#222" stroke-width="1.1" stroke-dasharray="4 1.6 1.2 1.6"/><path d="M1708.6,65 H1716 L1711,73.4 L1716,81.8 H1708.6" fill="none" stroke="#2f5fc0" stroke-width="1.3"/><path d="M1737,72 H1757.6" stroke="#1f4fa8" stroke-width="2.4"/><path d="M1741.5,73 L1738.5,77.6 M1745.5,73 L1742.5,77.6 M1749.5,73 L1746.5,77.6 M1753.5,73 L1750.5,77.6 M1757.5,73 L1754.5,77.6" stroke="#1f4fa8" stroke-width="1.2"/><path d="M1781.2,83.6 C1782,74 1786,69.2 1790.4,69.2" fill="none" stroke="#2f5fc0" stroke-width="2.6"/><path d="M1790.4,69.2 C1795,69.2 1799,74 1799.8,83.6" fill="none" stroke="#222" stroke-width="2.6"/><g stroke="#333" stroke-width="0.9"><path d="M1779.4,78.6 L1777,77.6 M1780.6,74.6 L1778,72.8 M1782.8,71.2 L1780.8,68.6 M1785.8,68.6 L1784.4,65.2 M1789,67.4 L1788.6,63.6 M1792.4,67.4 L1793,63.6 M1795.4,68.6 L1797,65.2 M1798.2,71.2 L1800.4,68.6 M1800.4,74.6 L1803,72.8 M1801.6,78.6 L1804,77.6"/></g></svg>
<svg class="abs" style="left:277px;top:68.2px" width="14" height="10" viewBox="0 0 14 10" ><path d="M1.6,1.8 L7,7.2 L12.4,1.8" fill="none" stroke="#222" stroke-width="2.4"/></svg>
<svg class="abs" style="left:341.7px;top:68.2px" width="14" height="10" viewBox="0 0 14 10" ><path d="M1.6,1.8 L7,7.2 L12.4,1.8" fill="none" stroke="#222" stroke-width="2.4"/></svg>
<svg class="abs" style="left:406.7px;top:68.2px" width="14" height="10" viewBox="0 0 14 10" ><path d="M1.6,1.8 L7,7.2 L12.4,1.8" fill="none" stroke="#222" stroke-width="2.4"/></svg>
<svg class="abs" style="left:472.2px;top:68.2px" width="14" height="10" viewBox="0 0 14 10" ><path d="M1.6,1.8 L7,7.2 L12.4,1.8" fill="none" stroke="#222" stroke-width="2.4"/></svg>
<svg class="abs" style="left:537.2px;top:68.2px" width="14" height="10" viewBox="0 0 14 10" ><path d="M1.6,1.8 L7,7.2 L12.4,1.8" fill="none" stroke="#222" stroke-width="2.4"/></svg>
<svg class="abs" style="left:601.8px;top:68.2px" width="14" height="10" viewBox="0 0 14 10" ><path d="M1.6,1.8 L7,7.2 L12.4,1.8" fill="none" stroke="#222" stroke-width="2.4"/></svg>
<svg class="abs" style="left:751.8px;top:68.2px" width="14" height="10" viewBox="0 0 14 10" ><path d="M1.6,1.8 L7,7.2 L12.4,1.8" fill="none" stroke="#222" stroke-width="2.4"/></svg>
<svg class="abs" style="left:906.8px;top:68.2px" width="14" height="10" viewBox="0 0 14 10" ><path d="M1.6,1.8 L7,7.2 L12.4,1.8" fill="none" stroke="#222" stroke-width="2.4"/></svg>
<svg class="abs" style="left:971.8px;top:68.2px" width="14" height="10" viewBox="0 0 14 10" ><path d="M1.6,1.8 L7,7.2 L12.4,1.8" fill="none" stroke="#222" stroke-width="2.4"/></svg>
<svg class="abs" style="left:1078.8px;top:68.2px" width="14" height="10" viewBox="0 0 14 10" ><path d="M1.6,1.8 L7,7.2 L12.4,1.8" fill="none" stroke="#222" stroke-width="2.4"/></svg>
<svg class="abs" style="left:1143.8px;top:68.2px" width="14" height="10" viewBox="0 0 14 10" ><path d="M1.6,1.8 L7,7.2 L12.4,1.8" fill="none" stroke="#222" stroke-width="2.4"/></svg>
<div class="abs" style="left:138.4px;top:57px;width:2px;height:33px;background:#d2d2d2"></div>
<div class="abs" style="left:227.8px;top:57px;width:2px;height:33px;background:#d2d2d2"></div>
<div class="abs" style="left:815.4px;top:57px;width:2px;height:33px;background:#d2d2d2"></div>
<div class="abs" style="left:1165px;top:57px;width:2px;height:33px;background:#d2d2d2"></div>
<div class="abs" style="left:1213px;top:57px;width:2px;height:33px;background:#d2d2d2"></div>
<div class="abs" style="left:1825px;top:53.5px;width:165px;height:40px;background:#ededed;border-radius:5px"></div>
<div class="abs t " style="left:1837.6px;top:63.93px;font-size:17.5px;line-height:20.11px;color:#444;font-weight:normal;white-space:nowrap;letter-spacing:-0.275px;">Search tools...</div>
<div class="abs" style="left:1951px;top:64.4px;width:24px;height:20px;border:1px solid #a8a8a8;border-radius:3px;background:#f7f7f7"></div>
<div class="abs t " style="left:1954.6px;top:66.64px;font-size:15px;line-height:17.23px;color:#444;font-weight:normal;white-space:nowrap;letter-spacing:-0.725px;">tab</div>
<div class="abs" style="left:0;top:51px;width:49px;height:1243px;background:#fafafa;border-right:1px solid #d6d6d6;border-top:1px solid #dcdcdc;box-sizing:content-box"></div>
<div class="abs" style="left:0;top:226.5px;width:49px;height:1px;background:#dcdcdc"></div>
<svg class="abs" style="left:10px;top:61px" width="30" height="26" viewBox="0 0 30 26" ><g stroke="#222" fill="none"><circle cx="7" cy="6.2" r="3.5" stroke-width="2"/><path d="M7,10 V21" stroke-width="2.2"/><path d="M7,18.4 C7,14 10,13 15,12" stroke-width="2"/><path d="M14.6,3.6 H27 M20.4,10 H27 M17,16.6 H27 M14.6,23 H27" stroke-width="2.2"/></g><g fill="#222"><circle cx="7" cy="21.4" r="2.7"/><circle cx="15.6" cy="11.8" r="2.4"/></g></svg>
<svg class="abs" style="left:13px;top:105px" width="25" height="25" viewBox="0 0 25 25" ><g fill="#222"><rect x="5.2" y="1" width="2.6" height="2.4"/><rect x="5.2" y="4.6" width="2.6" height="2.6"/><circle cx="6.5" cy="12.6" r="3.7"/><rect x="5.2" y="18" width="2.6" height="2.6"/><rect x="5.2" y="21.6" width="2.6" height="2.4"/></g><path d="M17.6,13.6 V24 M12.4,18.8 H22.8" stroke="#1a53b5" stroke-width="2.6"/></svg>
<svg class="abs" style="left:11px;top:150px" width="28" height="24" viewBox="0 0 28 24" ><ellipse cx="13.8" cy="9.6" rx="12" ry="8.2" fill="#2e2e2e"/><path d="M8,15 L2.6,21.6 L14,16.8 Z" fill="#2e2e2e"/></svg>
<svg class="abs" style="left:11px;top:193px" width="28" height="26" viewBox="0 0 28 26" ><g fill="none" stroke="#222"><circle cx="15.6" cy="13.4" r="8.4" stroke-width="2.4"/><path d="M12.4,2 H18.8 M15.6,2 V5 M21.6,5.4 L23.4,7.2" stroke-width="2"/><path d="M15.6,13.4 L19,10" stroke-width="2"/><path d="M3.4,9.6 H9 M1.8,13 H8 M3.4,16.4 H8.6" stroke-width="1.4"/></g></svg>
<svg class="abs" style="left:13px;top:237px" width="23" height="25" viewBox="0 0 23 25" ><rect x="2.4" y="2.4" width="18.2" height="20.2" rx="2.5" fill="none" stroke="#222" stroke-width="2.2"/><g fill="none" stroke="#222" stroke-width="1.5"><path d="M5,7.4 L6.6,9 L9.6,5.4"/><path d="M5,12.4 L6.6,14 L9.6,10.4"/><path d="M5,17.4 L6.6,19 L9.6,15.4"/></g><g fill="#222"><rect x="11.4" y="6.2" width="6.6" height="2.4"/><rect x="11.4" y="11.2" width="6.6" height="2.4"/><rect x="11.4" y="16.2" width="6.6" height="2.4"/></g></svg>
<svg class="abs" style="left:11.4px;top:1264.6px" width="28" height="24" viewBox="0 0 28 24" ><path d="M1.6,3 H23.6 V12.6 L21.4,12.6 A8.4,8.4 0 0 0 6.6,12.6 H1.6 Z" fill="#2a2a2a"/><circle cx="14.4" cy="13.4" r="5" fill="#fafafa" stroke="#2a2a2a" stroke-width="2.2"/><path d="M18,17 L23.6,22.6" stroke="#2a2a2a" stroke-width="2.6"/></svg>
<div class="abs" style="left:50px;top:96px;width:256px;height:1159px;background:#fff;border-top:1px solid #d2d2d2;border-right:2px solid #d2d2d2"></div>
<svg class="abs" style="left:63px;top:115px" width="21" height="22" viewBox="0 0 21 22" ><path d="M1.4,1.6 H19.4 L12.2,10.4 V19.6 L8.6,16.6 V10.4 Z" fill="none" stroke="#222" stroke-width="1.6" stroke-linejoin="round"/></svg>
<div class="abs" style="left:99px;top:106px;width:195px;height:35px;border:1px solid #9c9c9c;border-radius:4px;background:#fff"></div>
<div class="abs t " style="left:107px;top:116.65px;font-size:16.5px;line-height:18.96px;color:#9a9a9a;font-weight:normal;white-space:nowrap;font-style:italic;letter-spacing:-0.217px;">Filter by name or type</div>
<div class="abs t " style="left:55.3px;top:154.01px;font-size:16px;line-height:18.38px;color:#2a2a2a;font-weight:bold;white-space:nowrap;letter-spacing:0.001px;">Features (23)</div>
<svg class="abs" style="left:219px;top:153px" width="25" height="21" viewBox="0 0 25 21" ><path d="M3.4,7 V2.4 H9.8 L11.6,4.6 H23 V18 H9" fill="none" stroke="#c4c4c4" stroke-width="1.3"/><path d="M5.8,8.6 V17.4 M1.4,13 H10.2" stroke="#7f9fdc" stroke-width="1.8"/><path d="M1.6,18.8 H4 M1.4,16.6 V19" stroke="#c4c4c4" stroke-width="1" /></svg>
<svg class="abs" style="left:257px;top:151px" width="24" height="26" viewBox="0 0 24 26" ><g fill="none" stroke="#222"><circle cx="11.6" cy="14.2" r="8.6" stroke-width="2.4"/><path d="M8.4,2 H14.8 M11.6,2 V5.4 M18,5.6 L19.8,7.4" stroke-width="2"/><path d="M11.6,14.2 L15,17.8" stroke-width="2"/></g></svg>
<div class="abs" style="left:279px;top:181.5px;width:21px;height:709.5px;background:#f1f1f1"></div>
<div class="abs" style="left:281px;top:202px;width:17px;height:526.5px;background:#c1c1c1"></div>
<div class="abs" style="left:284.5px;top:189.6px;border:5px solid transparent;border-bottom:5.5px solid #a3a3a3;border-top:0"></div>
<div class="abs" style="left:284.5px;top:880px;border:5px solid transparent;border-top:6px solid #505050;border-bottom:0"></div>
<div class="abs" style="left:50px;top:895px;width:250px;height:1px;background:#dadada"></div>
<div class="abs" style="left:61.3px;top:213px;width:1.4px;height:129.5px;background:#cfcfcf"></div>
<div class="abs" style="left:56px;top:341.8px;width:12px;height:1.4px;background:#cfcfcf"></div>
<div class="abs" style="left:61.3px;top:408px;width:1.4px;height:129.5px;background:#cfcfcf"></div>
<div class="abs" style="left:56px;top:536.8px;width:12px;height:1.4px;background:#cfcfcf"></div>
<div class="abs" style="left:61.3px;top:603px;width:1.4px;height:194.5px;background:#cfcfcf"></div>
<div class="abs" style="left:56px;top:796.8px;width:12px;height:1.4px;background:#cfcfcf"></div>
<div class="abs" style="left:50px;top:540px;width:229px;height:30px;background:#b2d9f2"></div>
<svg class="abs" style="left:54.8px;top:192.8px" width="16" height="10" viewBox="0 0 16 10" ><path d="M1.4,1.6 L8,8 L14.6,1.6" fill="none" stroke="#444" stroke-width="2.5"/></svg>
<div class="abs t " style="left:79.4px;top:188.51px;font-size:16px;line-height:18.38px;color:#444;font-weight:normal;white-space:nowrap;letter-spacing:0.318px;">Default geometry</div>
<svg class="abs" style="left:85px;top:223.5px" width="12" height="12" viewBox="0 0 12 12" ><circle cx="5.6" cy="5.4" r="3.9" fill="none" stroke="#444" stroke-width="1.2"/><circle cx="5.6" cy="5.4" r="1.5" fill="#444"/></svg>
<div class="abs t " style="left:107px;top:221.01px;font-size:16px;line-height:18.38px;color:#444;font-weight:normal;white-space:nowrap;letter-spacing:-0.016px;">Origin</div>
<svg class="abs" style="left:81.4px;top:252.0px" width="20" height="20" viewBox="0 0 20 20" ><path d="M1,0.8 L18.6,3.6 V19.4 L1,16.2 Z" fill="#e2e2e2" stroke="#b4b4b4" stroke-width="1"/><path d="M9.6,2.4 V10.6 L18.4,12" fill="none" stroke="#b4b4b4" stroke-width="1"/></svg>
<div class="abs t " style="left:107.2px;top:253.51px;font-size:16px;line-height:18.38px;color:#aaaaaa;font-weight:normal;white-space:nowrap;letter-spacing:0.352px;">Top</div>
<svg class="abs" style="left:81.4px;top:284.5px" width="20" height="20" viewBox="0 0 20 20" ><path d="M1,0.8 L18.6,3.6 V19.4 L1,16.2 Z" fill="#e2e2e2" stroke="#b4b4b4" stroke-width="1"/><path d="M9.6,2.4 V10.6 L18.4,12" fill="none" stroke="#b4b4b4" stroke-width="1"/></svg>
<div class="abs t " style="left:107.2px;top:286.01px;font-size:16px;line-height:18.38px;color:#aaaaaa;font-weight:normal;white-space:nowrap;letter-spacing:0.315px;">Front</div>
<svg class="abs" style="left:81.4px;top:317.0px" width="20" height="20" viewBox="0 0 20 20" ><path d="M1,0.8 L18.6,3.6 V19.4 L1,16.2 Z" fill="#e2e2e2" stroke="#b4b4b4" stroke-width="1"/><path d="M9.6,2.4 V10.6 L18.4,12" fill="none" stroke="#b4b4b4" stroke-width="1"/></svg>
<div class="abs t " style="left:107.2px;top:318.51px;font-size:16px;line-height:18.38px;color:#aaaaaa;font-weight:normal;white-space:nowrap;letter-spacing:-0.088px;">Right</div>
<svg class="abs" style="left:57px;top:348.5px" width="21" height="22" viewBox="0 0 21 22" ><g fill="none" stroke="#555" stroke-width="1.2" stroke-linejoin="round"><path d="M10,1 L19.2,5.4 V15.6 L10,20.6 L1,15.6 V5.4 Z" fill="#f4f4f4"/><path d="M1,5.4 L10,10 L19.2,5.4 M10,10 V20.6"/><path d="M10,10 L19.2,5.4 V15.6 L10,20.6 Z" fill="#d8d8d8"/></g></svg>
<div class="abs t " style="left:83.2px;top:351.01px;font-size:16px;line-height:18.38px;color:#444;font-weight:normal;white-space:nowrap;letter-spacing:-0.243px;">Origin Cube 1</div>
<svg class="abs" style="left:224.3px;top:346.5px" width="10" height="24" viewBox="0 0 10 24" ><g fill="#222"><rect x="3.7" y="0.6" width="2.6" height="2"/><rect x="3.7" y="4" width="2.6" height="2.4"/><circle cx="5" cy="12" r="3.6"/><rect x="3.7" y="17.6" width="2.6" height="2.4"/><rect x="3.7" y="21.4" width="2.6" height="2"/></g></svg>
<svg class="abs" style="left:54.8px;top:387.8px" width="16" height="10" viewBox="0 0 16 10" ><path d="M1.4,1.6 L8,8 L14.6,1.6" fill="none" stroke="#444" stroke-width="2.5"/></svg>
<svg class="abs" style="left:81.6px;top:383.6px" width="21" height="16" viewBox="0 0 21 16" ><path d="M1,1.2 H7.6 L9.4,3.2 H19.6 V14.6 H1 Z" fill="none" stroke="#444" stroke-width="1.3" stroke-linejoin="round"/></svg>
<div class="abs t " style="left:108px;top:383.51px;font-size:16px;line-height:18.38px;color:#444;font-weight:normal;white-space:nowrap;letter-spacing:0.01px;">Frame (4)</div>
<svg class="abs" style="left:81.4px;top:413.9px" width="20" height="20" viewBox="0 0 20 20" ><g fill="none" stroke="#aaa" stroke-width="1.2" stroke-linejoin="round"><path d="M3.4,15.2 L4.6,11 L14.2,1.6 L17.6,5 L8,14.4 Z"/><path d="M4.6,11 L8,14.4 M12.4,3.4 L15.8,6.8"/></g><path d="M0.6,18.4 H19.4" stroke="#9fb4d8" stroke-width="1.3"/></svg>
<div class="abs t " style="left:107.2px;top:416.01px;font-size:16px;line-height:18.38px;color:#aaaaaa;font-weight:normal;white-space:nowrap;letter-spacing:0.037px;">Tube Sketch</div>
<svg class="abs" style="left:81px;top:447.0px" width="20" height="20" viewBox="0 0 20 20" ><g stroke="#555" stroke-width="1.1" stroke-linejoin="round"><path d="M1,1.4 H15.6 L18.4,4 V18.6 H3.8 L1,16 Z" fill="#bbb"/><path d="M1,1.4 L3.8,4 H18.4 M3.8,4 V18.6" fill="none"/><path d="M3.8,4 H11 V11 H3.8 Z" fill="#d6d6d6" stroke="none"/><path d="M11,11 H18.4 V18.6 H11 Z" fill="#8e8e8e" stroke="none"/><path d="M11,4 V18.6 M3.8,11 H18.4" stroke="#e8e8e8" stroke-width="0.9" fill="none"/></g></svg>
<div class="abs t " style="left:107px;top:448.51px;font-size:16px;line-height:18.38px;color:#444;font-weight:normal;white-space:nowrap;letter-spacing:-0.029px;">Extrude Indi...</div>
<svg class="abs" style="left:224.3px;top:443.5px" width="10" height="24" viewBox="0 0 10 24" ><g fill="#222"><rect x="3.7" y="0.6" width="2.6" height="2"/><rect x="3.7" y="4" width="2.6" height="2.4"/><circle cx="5" cy="12" r="3.6"/><rect x="3.7" y="17.6" width="2.6" height="2.4"/><rect x="3.7" y="21.4" width="2.6" height="2"/></g></svg>
<svg class="abs" style="left:79.6px;top:477.5px" width="22" height="23" viewBox="0 0 22 23" ><g stroke="#333" stroke-width="1.3" stroke-linejoin="round"><path d="M1.2,1.2 L10.4,0.8 L20.6,5 V21.8 L10.6,20.4 L1.2,15.4 Z" fill="#e9e9e9"/><path d="M1.2,1.2 L10.6,5.6 L20.6,5 M10.6,5.6 V20.4" fill="none"/><path d="M13,8 L18.4,7.6 V18.8 L13,18 Z" fill="#999" stroke-width="0.9"/><path d="M14.6,8.6 L16.8,17.6" stroke="#ddd" stroke-width="0.9"/></g><g fill="none" stroke="#333" stroke-width="1.1"><circle cx="3.8" cy="6.2" r="1.2"/><circle cx="7.6" cy="8" r="1.2"/><circle cx="3.8" cy="11.6" r="1.2"/><circle cx="7.6" cy="13.6" r="1.2"/></g></svg>
<div class="abs t " style="left:107px;top:481.01px;font-size:16px;line-height:18.38px;color:#444;font-weight:normal;white-space:nowrap;letter-spacing:-0.103px;">Tube Conver...</div>
<svg class="abs" style="left:224.3px;top:476.5px" width="10" height="24" viewBox="0 0 10 24" ><g fill="#222"><rect x="3.7" y="0.6" width="2.6" height="2"/><rect x="3.7" y="4" width="2.6" height="2.4"/><circle cx="5" cy="12" r="3.6"/><rect x="3.7" y="17.6" width="2.6" height="2.4"/><rect x="3.7" y="21.4" width="2.6" height="2"/></g></svg>
<svg class="abs" style="left:79.6px;top:511.0px" width="23" height="21" viewBox="0 0 23 21" ><path d="M4.4,1.4 L17.4,1.2 C21,1.2 22,4.2 20.2,6.6 L9.6,18.4 C7.4,20.6 3.4,20 2,17.2 L1.2,5 C1.2,2.8 2.4,1.6 4.4,1.4 Z" fill="#f0f0f0" stroke="#333" stroke-width="1.5"/><path d="M3.4,17.6 C5,19.6 8,19.6 9.6,18.4 L20.2,6.6" fill="none" stroke="#888" stroke-width="1.6"/><g fill="#999" stroke="#333" stroke-width="1"><circle cx="6.6" cy="6.2" r="2"/><circle cx="16.4" cy="5.6" r="2"/><circle cx="6.8" cy="15.2" r="2"/></g></svg>
<div class="abs t " style="left:107px;top:513.51px;font-size:16px;line-height:18.38px;color:#444;font-weight:normal;white-space:nowrap;letter-spacing:-0.29px;">Gusset 1</div>
<svg class="abs" style="left:224.3px;top:509.0px" width="10" height="24" viewBox="0 0 10 24" ><g fill="#222"><rect x="3.7" y="0.6" width="2.6" height="2"/><rect x="3.7" y="4" width="2.6" height="2.4"/><circle cx="5" cy="12" r="3.6"/><rect x="3.7" y="17.6" width="2.6" height="2.4"/><rect x="3.7" y="21.4" width="2.6" height="2"/></g></svg>
<svg class="abs" style="left:57px;top:544.1px" width="20" height="20" viewBox="0 0 20 20" ><g fill="none" stroke="#8aa6bd" stroke-width="1.2" stroke-linejoin="round"><path d="M3.4,15.2 L4.6,11 L14.2,1.6 L17.6,5 L8,14.4 Z"/><path d="M4.6,11 L8,14.4 M12.4,3.4 L15.8,6.8"/></g><path d="M0.6,18.4 H19.4" stroke="#8fa9e0" stroke-width="1.3"/></svg>
<div class="abs t " style="left:83.2px;top:546.01px;font-size:16px;line-height:18.38px;color:#5487ab;font-weight:bold;white-space:nowrap;letter-spacing:-0.046px;">Gearbox Layout</div>
<svg class="abs" style="left:54.8px;top:582.8px" width="16" height="10" viewBox="0 0 16 10" ><path d="M1.4,1.6 L8,8 L14.6,1.6" fill="none" stroke="#444" stroke-width="2.5"/></svg>
<svg class="abs" style="left:81.6px;top:578.6px" width="21" height="16" viewBox="0 0 21 16" ><path d="M1,1.2 H7.6 L9.4,3.2 H19.6 V14.6 H1 Z" fill="none" stroke="#444" stroke-width="1.3" stroke-linejoin="round"/></svg>
<div class="abs t " style="left:108px;top:578.51px;font-size:16px;line-height:18.38px;color:#444;font-weight:normal;white-space:nowrap;letter-spacing:-0.152px;">GB Plates (6)</div>
<svg class="abs" style="left:81.4px;top:608.9px" width="20" height="20" viewBox="0 0 20 20" ><g fill="none" stroke="#aaa" stroke-width="1.2" stroke-linejoin="round"><path d="M3.4,15.2 L4.6,11 L14.2,1.6 L17.6,5 L8,14.4 Z"/><path d="M4.6,11 L8,14.4 M12.4,3.4 L15.8,6.8"/></g><path d="M0.6,18.4 H19.4" stroke="#9fb4d8" stroke-width="1.3"/></svg>
<div class="abs t " style="left:108px;top:611.01px;font-size:16px;line-height:18.38px;color:#aaaaaa;font-weight:normal;white-space:nowrap;font-style:italic;letter-spacing:0.161px;">Plate Sketch</div>
<svg class="abs" style="left:81px;top:641.4px" width="20" height="20" viewBox="0 0 20 20" ><g fill="none" stroke="#aaa" stroke-width="1.1" stroke-linejoin="round"><path d="M1,1 H16.4 L19,3.6 V19 H3.6 L1,16.4 Z" fill="#fff"/><path d="M1,1 L3.6,3.6 H19 M3.6,3.6 V19"/><path d="M7.4,8 H16.8 L18.8,10 V18.8 H9.4 L7.4,16.8 Z" fill="#c8c8c8"/><path d="M7.4,8 L9.4,10 H18.8 M9.4,10 V18.8"/></g></svg>
<div class="abs t " style="left:108px;top:643.51px;font-size:16px;line-height:18.38px;color:#aaaaaa;font-weight:normal;white-space:nowrap;font-style:italic;letter-spacing:0.229px;">Plate Extrude</div>
<svg class="abs" style="left:81.4px;top:673.9px" width="20" height="20" viewBox="0 0 20 20" ><g fill="none" stroke="#aaa" stroke-width="1.2" stroke-linejoin="round"><path d="M3.4,15.2 L4.6,11 L14.2,1.6 L17.6,5 L8,14.4 Z"/><path d="M4.6,11 L8,14.4 M12.4,3.4 L15.8,6.8"/></g><path d="M0.6,18.4 H19.4" stroke="#9fb4d8" stroke-width="1.3"/></svg>
<div class="abs t " style="left:108px;top:676.01px;font-size:16px;line-height:18.38px;color:#aaaaaa;font-weight:normal;white-space:nowrap;font-style:italic;letter-spacing:0.24px;">Inner plate</div>
<svg class="abs" style="left:81px;top:706.4px" width="20" height="20" viewBox="0 0 20 20" ><g fill="none" stroke="#aaa" stroke-width="1.1" stroke-linejoin="round"><path d="M1,1 H16.4 L19,3.6 V19 H3.6 L1,16.4 Z" fill="#fff"/><path d="M1,1 L3.6,3.6 H19 M3.6,3.6 V19"/><path d="M7.4,8 H16.8 L18.8,10 V18.8 H9.4 L7.4,16.8 Z" fill="#c8c8c8"/><path d="M7.4,8 L9.4,10 H18.8 M9.4,10 V18.8"/></g></svg>
<div class="abs t " style="left:108px;top:708.51px;font-size:16px;line-height:18.38px;color:#aaaaaa;font-weight:normal;white-space:nowrap;font-style:italic;letter-spacing:0.115px;">Extrude 2</div>
<svg class="abs" style="left:81px;top:739.5px" width="20" height="20" viewBox="0 0 20 20" ><g fill="none" stroke="#aaa" stroke-width="1.1" stroke-linejoin="round"><path d="M1,8 C1,3.6 3.6,1 8,1 H16.4 L19,3.6 V19 H3.6 L1,16.4 Z" fill="#fff"/><path d="M3.6,19 V10.6 C3.6,6.2 6.2,3.6 10.6,3.6 H19"/><path d="M1,8 C1,3.6 3.6,1 8,1 L10.6,3.6 C6.2,3.6 3.6,6.2 3.6,10.6 Z" fill="#c8c8c8"/></g></svg>
<div class="abs t " style="left:108px;top:741.01px;font-size:16px;line-height:18.38px;color:#aaaaaa;font-weight:normal;white-space:nowrap;font-style:italic;letter-spacing:0.182px;">Fillet 1</div>
<svg class="abs" style="left:80px;top:771.4px" width="21" height="21" viewBox="0 0 21 21" ><g fill="none" stroke="#aaa" stroke-width="1.2"><ellipse cx="12.2" cy="5.4" rx="6.8" ry="3.4" transform="rotate(18 12.2 5.4)"/><ellipse cx="12.4" cy="5.2" rx="2.6" ry="1.2" transform="rotate(18 12.4 5.2)" stroke-width="0.9"/><path d="M5.6,3.6 L1,14 M18.8,7.4 L13.6,20 M8,8.4 L3.4,19"/><path d="M6,6.6 C9,9.6 14,10.8 18,9.4" stroke-width="0.9"/></g></svg>
<div class="abs t " style="left:109px;top:773.51px;font-size:16px;line-height:18.38px;color:#aaaaaa;font-weight:normal;white-space:nowrap;font-style:italic;">?</div>
<svg class="abs" style="left:224.3px;top:768.5px" width="10" height="24" viewBox="0 0 10 24" ><g fill="#222"><rect x="3.7" y="0.6" width="2.6" height="2"/><rect x="3.7" y="4" width="2.6" height="2.4"/><circle cx="5" cy="12" r="3.6"/><rect x="3.7" y="17.6" width="2.6" height="2.4"/><rect x="3.7" y="21.4" width="2.6" height="2"/></g></svg>
<div class="abs" style="left:56.4px;top:805.2px;width:19.4px;height:17.6px;border:1px solid #cfcfcf;border-radius:2.5px;background:#fff"></div>
<div class="abs t " style="left:58.6px;top:807.88px;font-size:13px;line-height:14.94px;color:#a8a8a8;font-weight:normal;white-space:nowrap;letter-spacing:-2.983px;">BG</div>
<div class="abs t " style="left:84.4px;top:806.01px;font-size:16px;line-height:18.38px;color:#aaaaaa;font-weight:normal;white-space:nowrap;font-style:italic;letter-spacing:-0.311px;">Belt Gen 1</div>
<svg class="abs" style="left:224.3px;top:801.5px" width="10" height="24" viewBox="0 0 10 24" ><g fill="#222"><rect x="3.7" y="0.6" width="2.6" height="2"/><rect x="3.7" y="4" width="2.6" height="2.4"/><circle cx="5" cy="12" r="3.6"/><rect x="3.7" y="17.6" width="2.6" height="2.4"/><rect x="3.7" y="21.4" width="2.6" height="2"/></g></svg>
<svg class="abs" style="left:56px;top:836.4px" width="21" height="21" viewBox="0 0 21 21" ><g fill="none" stroke="#aaa" stroke-width="1.2"><ellipse cx="12.2" cy="5.4" rx="6.8" ry="3.4" transform="rotate(18 12.2 5.4)"/><ellipse cx="12.4" cy="5.2" rx="2.6" ry="1.2" transform="rotate(18 12.4 5.2)" stroke-width="0.9"/><path d="M5.6,3.6 L1,14 M18.8,7.4 L13.6,20 M8,8.4 L3.4,19"/><path d="M6,6.6 C9,9.6 14,10.8 18,9.4" stroke-width="0.9"/></g></svg>
<div class="abs t " style="left:85px;top:838.51px;font-size:16px;line-height:18.38px;color:#aaaaaa;font-weight:normal;white-space:nowrap;font-style:italic;">?</div>
<svg class="abs" style="left:224.3px;top:833.5px" width="10" height="24" viewBox="0 0 10 24" ><g fill="#222"><rect x="3.7" y="0.6" width="2.6" height="2"/><rect x="3.7" y="4" width="2.6" height="2.4"/><circle cx="5" cy="12" r="3.6"/><rect x="3.7" y="17.6" width="2.6" height="2.4"/><rect x="3.7" y="21.4" width="2.6" height="2"/></g></svg>
<svg class="abs" style="left:56px;top:868.9px" width="21" height="21" viewBox="0 0 21 21" ><g fill="none" stroke="#aaa" stroke-width="1.2"><ellipse cx="12.2" cy="5.4" rx="6.8" ry="3.4" transform="rotate(18 12.2 5.4)"/><ellipse cx="12.4" cy="5.2" rx="2.6" ry="1.2" transform="rotate(18 12.4 5.2)" stroke-width="0.9"/><path d="M5.6,3.6 L1,14 M18.8,7.4 L13.6,20 M8,8.4 L3.4,19"/><path d="M6,6.6 C9,9.6 14,10.8 18,9.4" stroke-width="0.9"/></g></svg>
<div class="abs t " style="left:85px;top:871.01px;font-size:16px;line-height:18.38px;color:#aaaaaa;font-weight:normal;white-space:nowrap;font-style:italic;">?</div>
<svg class="abs" style="left:224.3px;top:866.5px" width="10" height="24" viewBox="0 0 10 24" ><g fill="#222"><rect x="3.7" y="0.6" width="2.6" height="2"/><rect x="3.7" y="4" width="2.6" height="2.4"/><circle cx="5" cy="12" r="3.6"/><rect x="3.7" y="17.6" width="2.6" height="2.4"/><rect x="3.7" y="21.4" width="2.6" height="2"/></g></svg>
<svg class="abs" style="left:54.8px;top:907.6px" width="16" height="10" viewBox="0 0 16 10" ><path d="M1.4,1.6 L8,8 L14.6,1.6" fill="none" stroke="#444" stroke-width="2.5"/></svg>
<div class="abs t " style="left:79.4px;top:903.51px;font-size:16px;line-height:18.38px;color:#444;font-weight:normal;white-space:nowrap;letter-spacing:0.057px;">Parts (4)</div>
<svg class="abs" style="left:80.6px;top:933.5px" width="20" height="20" viewBox="0 0 20 20" ><g fill="none" stroke="#555" stroke-width="1.2" stroke-linejoin="round"><path d="M9.6,3.2 L12.4,1 H18.6 V16 L15.8,18.4 H1 V11.6 L3.8,9.2 H9.6 Z"/><path d="M9.6,3.2 H15.8 V18.4 M15.8,3.2 L18.6,1 M1,11.6 H9.6 V3.2 M9.6,11.6 L12.2,9.4" /></g></svg>
<div class="abs t " style="left:107.2px;top:936.01px;font-size:16px;line-height:18.38px;color:#444;font-weight:normal;white-space:nowrap;letter-spacing:0.079px;">Tube 1&quot;x1&quot;x7&quot;</div>
<svg class="abs" style="left:80.6px;top:966.0px" width="20" height="20" viewBox="0 0 20 20" ><g fill="none" stroke="#555" stroke-width="1.2" stroke-linejoin="round"><path d="M9.6,3.2 L12.4,1 H18.6 V16 L15.8,18.4 H1 V11.6 L3.8,9.2 H9.6 Z"/><path d="M9.6,3.2 H15.8 V18.4 M15.8,3.2 L18.6,1 M1,11.6 H9.6 V3.2 M9.6,11.6 L12.2,9.4" /></g></svg>
<div class="abs t " style="left:107.2px;top:968.51px;font-size:16px;line-height:18.38px;color:#444;font-weight:normal;white-space:nowrap;letter-spacing:0.079px;">Tube 1&quot;x1&quot;x7&quot;</div>
<svg class="abs" style="left:80.6px;top:998.5px" width="20" height="20" viewBox="0 0 20 20" ><g fill="none" stroke="#555" stroke-width="1.2" stroke-linejoin="round"><path d="M9.6,3.2 L12.4,1 H18.6 V16 L15.8,18.4 H1 V11.6 L3.8,9.2 H9.6 Z"/><path d="M9.6,3.2 H15.8 V18.4 M15.8,3.2 L18.6,1 M1,11.6 H9.6 V3.2 M9.6,11.6 L12.2,9.4" /></g></svg>
<div class="abs t " style="left:107.2px;top:1001.01px;font-size:16px;line-height:18.38px;color:#444;font-weight:normal;white-space:nowrap;letter-spacing:0.079px;">Tube 1&quot;x1&quot;x8&quot;</div>
<svg class="abs" style="left:80.6px;top:1031.0px" width="20" height="20" viewBox="0 0 20 20" ><g fill="none" stroke="#555" stroke-width="1.2" stroke-linejoin="round"><path d="M9.6,3.2 L12.4,1 H18.6 V16 L15.8,18.4 H1 V11.6 L3.8,9.2 H9.6 Z"/><path d="M9.6,3.2 H15.8 V18.4 M15.8,3.2 L18.6,1 M1,11.6 H9.6 V3.2 M9.6,11.6 L12.2,9.4" /></g></svg>
<div class="abs t " style="left:107.2px;top:1033.51px;font-size:16px;line-height:18.38px;color:#444;font-weight:normal;white-space:nowrap;letter-spacing:0.059px;">Frame Gusset</div>
<div class="abs" style="left:306px;top:644.5px;width:41.6px;height:41px;background:#fff;border:1px solid #cfcfcf;border-left:0"></div>
<svg class="abs" style="left:315px;top:655px" width="26" height="24" viewBox="0 0 26 24" ><g fill="none" stroke="#222"><path d="M1.4,1.6 L4.6,4.8 L7.8,1.6" stroke-width="1.5"/><path d="M4.6,6.4 V22" stroke-width="2"/><path d="M10,4.4 H24.6 M10,10.2 H24.6 M10,16 H24.6 M10,21.6 H24.6" stroke-width="1.3"/></g></svg>
<div class="abs" style="left:326px;top:161px;width:275px;height:273.5px;background:#fff;box-shadow:0 3px 13px rgba(0,0,0,0.24)"></div>
<div class="abs" style="left:326px;top:196px;width:275px;height:1px;background:#dcdcdc"></div>
<div class="abs t " style="left:334.2px;top:171.23px;font-size:15px;line-height:17.23px;color:#1e1e1e;font-weight:bold;white-space:nowrap;letter-spacing:0.032px;">Gearbox Layout</div>
<div class="abs" style="left:530.6px;top:161px;width:34.8px;height:34.8px;background:#0b9713"></div>
<svg class="abs" style="left:530.6px;top:161px" width="35" height="35" viewBox="0 0 35 35" ><path d="M8.4,17.4 L15.6,24.2 L27,11.4" fill="none" stroke="#fff" stroke-width="3.8"/></svg>
<svg class="abs" style="left:574px;top:170px" width="18" height="18" viewBox="0 0 18 18" ><path d="M2.6,2.6 L15.6,15.6 M15.6,2.6 L2.6,15.6" stroke="#c7273b" stroke-width="3.6"/></svg>
<div class="abs" style="left:330.3px;top:203.5px;width:232.6px;height:52.8px;border:1px solid #cdcdcd;border-radius:3px;background:#fff"></div>
<div class="abs t " style="left:337.8px;top:211.45px;font-size:12.6px;line-height:14.48px;color:#555;font-weight:normal;white-space:nowrap;letter-spacing:-0.077px;">Sketch plane</div>
<div class="abs t " style="left:339px;top:233.31px;font-size:16px;line-height:18.38px;color:#555;font-weight:normal;white-space:nowrap;letter-spacing:0.024px;">Face of Extrude Individual...</div>
<svg class="abs" style="left:539px;top:236px" width="12" height="13" viewBox="0 0 12 13" ><path d="M1.6,1.8 L10.2,11 M10.2,1.8 L1.6,11" stroke="#444" stroke-width="1.3"/></svg>
<svg class="abs" style="left:569px;top:206px" width="24" height="25" viewBox="0 0 24 25" ><g fill="none" stroke="#222"><circle cx="12" cy="12.5" r="10.3" stroke-width="1.4"/><circle cx="12" cy="12.5" r="7.9" stroke-width="1.4"/><path d="M12,4.6 V12.5 H19.9" stroke-width="1.4"/></g></svg>
<div class="abs" style="left:331.2px;top:274.0px;width:12.5px;height:12.5px;border:1px solid #6e6e6e;border-radius:3px;background:#fff"></div>
<div class="abs t " style="left:352px;top:272.11px;font-size:16px;line-height:18.38px;color:#555;font-weight:normal;white-space:nowrap;letter-spacing:0.273px;">Disable imprinting</div>
<div class="abs" style="left:331.2px;top:308.20000000000005px;width:12.5px;height:12.5px;border:1px solid #6e6e6e;border-radius:3px;background:#fff"></div>
<div class="abs t " style="left:352px;top:306.31px;font-size:16px;line-height:18.38px;color:#555;font-weight:normal;white-space:nowrap;letter-spacing:0.251px;">Show constraints</div>
<div class="abs" style="left:331.2px;top:342.0px;width:14.6px;height:14.6px;background:#1853b6;border-radius:3px"></div>
<svg class="abs" style="left:331.3px;top:342.20000000000005px" width="15" height="15" viewBox="0 0 15 15" ><path d="M3.2,7.4 L6.2,10.4 L11.4,4.2" fill="none" stroke="#fff" stroke-width="2"/></svg>
<div class="abs t " style="left:352px;top:340.31px;font-size:16px;line-height:18.38px;color:#555;font-weight:normal;white-space:nowrap;letter-spacing:0.077px;">Show expressions</div>
<div class="abs" style="left:331.2px;top:376.2px;width:14.6px;height:14.6px;background:#1853b6;border-radius:3px"></div>
<svg class="abs" style="left:331.3px;top:376.40000000000003px" width="15" height="15" viewBox="0 0 15 15" ><path d="M3.2,7.4 L6.2,10.4 L11.4,4.2" fill="none" stroke="#fff" stroke-width="2"/></svg>
<div class="abs t " style="left:352px;top:374.51px;font-size:16px;line-height:18.38px;color:#555;font-weight:normal;white-space:nowrap;letter-spacing:0.102px;">Show overdefined</div>
<div class="abs" style="left:508.4px;top:404.2px;width:58.6px;height:25.6px;border:1px solid #bdbdbd;border-radius:4px;background:#fff"></div>
<div class="abs t " style="left:521.8px;top:409.44px;font-size:15px;line-height:17.23px;color:#333;font-weight:normal;white-space:nowrap;letter-spacing:0.022px;">Final</div>
<div class="abs" style="left:580px;top:414px;width:15.4px;height:15.4px;border-radius:50%;background:#b3b3b3;color:#fff;font-weight:bold;font-size:12.5px;line-height:16px;text-align:center">?</div>
<svg class="abs" style="left:2180px;top:105px" width="210" height="205" viewBox="0 0 210 205" >
<polygon points="106,10 114.6,22.6 97.4,22.6" fill="#e6e8eb"/>
<path d="M80,21.7 C64,27 51,35 42,47" fill="none" stroke="#e6e8eb" stroke-width="5"/><polygon points="38,37 50,52 38,52" fill="#e6e8eb"/>
<path d="M131,21.7 C147,27 160,35 169,47" fill="none" stroke="#e6e8eb" stroke-width="5"/><polygon points="173,37 161,52 173,52" fill="#e6e8eb"/>
<polygon points="13,103.6 24.2,95.4 24.2,112.4" fill="#e6e8eb"/>
<polygon points="199.3,103.6 187.2,95.4 187.2,112.4" fill="#e6e8eb"/>
<polygon points="97,185 114,185 105.5,196.8" fill="#e6e8eb"/>
<path d="M83,68 H128 L140.6,80 V127 L128,139 H83 L70.6,127 V80 Z" fill="#e6e8eb"/>
<rect x="77.6" y="76" width="55" height="56" rx="11" fill="#fdfdfe"/>
<path d="M67.2,68 V141.7 H140.8" fill="none" stroke="#3333dd" stroke-width="0"/>
<path d="M67.2,68 V142" stroke="#3535d8" stroke-width="2"/><path d="M66.2,141.7 H140.8" stroke="#2fae33" stroke-width="2"/>
</svg>
<svg class="abs" style="left:2240px;top:150px" width="14" height="20" viewBox="0 0 14 20" ><text x="3.3" y="16.7" font-family="Liberation Sans, sans-serif" font-weight="bold" font-size="17.2" fill="#4545d8" textLength="8.2" lengthAdjust="spacingAndGlyphs">Z</text></svg>
<svg class="abs" style="left:2325px;top:236px" width="16" height="20" viewBox="0 0 16 20" ><text x="3.5" y="16.9" font-family="Liberation Sans, sans-serif" font-weight="bold" font-size="17.2" fill="#2fae33" textLength="9.4" lengthAdjust="spacingAndGlyphs">Y</text></svg>
<div class="abs t " style="left:2268.8px;top:199.47px;font-size:15.5px;line-height:17.81px;color:#555;font-weight:normal;white-space:nowrap;letter-spacing:-0.646px;">Right</div>
<svg class="abs" style="left:2329px;top:278px" width="25" height="26" viewBox="0 0 25 26" ><g stroke="#222" stroke-width="1.2" stroke-linejoin="round"><path d="M12,1.6 L23,6 V19 L12,24.4 L1.6,19 V6 Z" fill="#fff"/><path d="M1.6,6 L12,10.6 V24.4 L1.6,19 Z" fill="#a8a8a8"/><path d="M12,10.6 L23,6 V19 L12,24.4 Z" fill="#e4e4e4"/></g></svg>
<div class="abs" style="left:2363px;top:289px;border:5px solid transparent;border-top:5.5px solid #222;border-bottom:0"></div>
<div class="abs" style="left:2358px;top:534px;width:40px;height:164.6px;background:#fff;border:1px solid #cbcbcb;border-right:0"></div>
<div class="abs" style="left:2358px;top:575.5px;width:40px;height:1px;background:#cbcbcb"></div>
<div class="abs" style="left:2358px;top:617px;width:40px;height:1px;background:#cbcbcb"></div>
<div class="abs" style="left:2358px;top:658.4px;width:40px;height:1px;background:#cbcbcb"></div>
<div class="abs" style="left:2358px;top:713.4px;width:40px;height:82.4px;background:#fff;border:1px solid #cbcbcb;border-right:0"></div>
<div class="abs" style="left:2358px;top:754.5px;width:40px;height:1px;background:#cbcbcb"></div>
<svg class="abs" style="left:2365px;top:543px" width="28" height="26" viewBox="0 0 28 26" ><g stroke="#666" stroke-width="0.9"><path d="M3.4,18.4 L13,2 L19.6,5.8 L11,18.6 Z" fill="#7d7d7d"/><path d="M9,18.6 L19.4,5.6 L25.6,10.4 L18,18.6 Z" fill="#a6a6a6"/><path d="M15,18.6 L22.2,11 L26,14.6 V18.6 Z" fill="#c4c4c4"/><rect x="1.4" y="18.4" width="24.6" height="6.4" fill="#fff"/><path d="M9.8,18.4 V24.8 M18,18.4 V24.8"/><rect x="18" y="18.4" width="8" height="6.4" fill="#d8d8d8"/></g><circle cx="5.4" cy="21.6" r="1.3" fill="#666"/></svg>
<svg class="abs" style="left:2365px;top:585px" width="28" height="27" viewBox="0 0 28 27" ><g stroke="#333" stroke-width="1.3" fill="#fff" stroke-linejoin="round"><path d="M15.6,6 L25,10.4 V20.6 L15.6,25.4 L6.4,20.6 V10.4 Z"/><path d="M6.4,10.4 L15.6,14.8 L25,10.4 M15.6,14.8 V25.4" fill="none"/></g><rect x="1" y="1.2" width="12.4" height="9.6" fill="#2b62d0"/><path d="M1,4.4 H13.4 M1,7.6 H13.4 M5.1,1.2 V10.8 M9.2,1.2 V10.8" stroke="#9fbbf0" stroke-width="0.9"/></svg>
<svg class="abs" style="left:2365px;top:626px" width="28" height="27" viewBox="0 0 28 27" ><g stroke="#333" stroke-width="1.2" fill="#fff" stroke-linejoin="round"><path d="M14.6,9 L21.4,12 V19.4 L14.6,22.8 L8,19.4 V12 Z"/><path d="M8,12 L14.6,15.2 L21.4,12 M14.6,15.2 V22.8" fill="none"/></g><g fill="none" stroke="#333" stroke-width="1.3"><path d="M6.4,10.6 C4.6,10.6 4.8,12.4 4.8,14 C4.8,15.4 4.2,16 3,16.4 C4.2,16.8 4.8,17.4 4.8,18.8 C4.8,20.4 4.6,22.6 6.4,22.6"/><path d="M22.8,8.6 C24.6,8.6 24.4,11 24.4,13 C24.4,14.8 25,15.8 26.2,16.2 C25,16.6 24.4,17.6 24.4,19.4 C24.4,21.4 24.6,23.6 22.8,23.6"/></g><rect x="1" y="1.2" width="12.4" height="9.6" fill="#333"/><path d="M1,4.4 H13.4 M1,7.6 H13.4 M5.1,1.2 V10.8 M9.2,1.2 V10.8" stroke="#ccc" stroke-width="0.9"/></svg>
<svg class="abs" style="left:2365px;top:668px" width="28" height="27" viewBox="0 0 28 27" ><rect x="1" y="1.2" width="12.4" height="9.6" fill="#333"/><path d="M1,4.4 H13.4 M1,7.6 H13.4 M5.1,1.2 V10.8 M9.2,1.2 V10.8" stroke="#ccc" stroke-width="0.9"/><g fill="none" stroke="#222" stroke-width="2"><path d="M4.8,10.4 C1.8,14 1.8,19.6 4.8,23.6"/><path d="M22.8,7.4 C26.2,12 26.2,19 22.8,23.6"/></g><text x="13.8" y="21.6" text-anchor="middle" font-family="Liberation Serif, serif" font-style="italic" font-weight="bold" font-size="19" fill="#222">x</text></svg>
<div class="abs" style="left:2363.8px;top:719px;width:30px;height:30px;border-radius:4px;background:#dcdcdc"></div>
<svg class="abs" style="left:2365.6px;top:720.8px" width="26.4" height="26.4" viewBox="0 0 26.4 26.4" ><defs><clipPath id="pc"><circle cx="13.2" cy="13.2" r="12.6"/></clipPath></defs><g clip-path="url(#pc)"><polygon points="0,0 26.4,0 13.2,13.2" fill="#7bc653"/><polygon points="26.4,0 26.4,26.4 13.2,13.2" fill="#4fb4ea"/><polygon points="26.4,26.4 0,26.4 13.2,13.2" fill="#efb548"/><polygon points="0,26.4 0,0 13.2,13.2" fill="#d0433f"/><path d="M0,0 L26.4,26.4 M26.4,0 L0,26.4" stroke="#e4e4e4" stroke-width="1.6"/></g></svg>
<div class="abs" style="left:2363.8px;top:760px;width:30px;height:31px;border-radius:4px;background:#dcdcdc"></div>
<div class="abs" style="left:2366.8px;top:762.9px;width:21.5px;height:21.5px;border:2px solid #0c1a3c;background:#155fd8"></div>
<svg class="abs" style="left:2368.8px;top:764.9px" width="21.5" height="21.5" viewBox="0 0 21.5 21.5" ><text x="10.8" y="18.2" text-anchor="middle" textLength="18.6" lengthAdjust="spacingAndGlyphs" font-family="Liberation Serif, serif" font-weight="bold" font-size="21" fill="#fff">MK</text></svg>
<svg class="abs" style="left:2274px;top:1229px" width="24" height="19" viewBox="0 0 24 19" ><g fill="none" stroke="#222" stroke-width="1.5"><ellipse cx="15" cy="6" rx="7" ry="4"/><ellipse cx="15" cy="5.8" rx="3.2" ry="1.5" stroke-width="1.2"/><path d="M8,6 V11 M22,6 V13 C22,16 19,17.4 15,17.4 H1.6 V11 H9.6"/></g><path d="M4,12 V16.6 M7,13.4 V16.6 M10,12.4 V16.6 M13,13.4 V16.6 M16,12.4 V16.6 M19,12.6 V15.8" stroke="#222" stroke-width="1"/></svg>
<svg class="abs" style="left:2316px;top:1229.6px" width="27" height="19" viewBox="0 0 27 19" ><g fill="none" stroke="#222"><path d="M1.6,17.4 C1.6,8 6.6,1.8 13.4,1.8 C20.2,1.8 25.2,8 25.2,17.4 Z" stroke-width="1.7" stroke-linejoin="round"/><path d="M6.8,14 C7.6,9.6 10,7.4 13.4,7.4 C16.8,7.4 19.2,9.6 20,14 H15.6 C15.4,12.4 14.6,11.6 13.4,11.6 C12.2,11.6 11.4,12.4 11.2,14 Z" stroke-width="1.5" stroke-linejoin="round"/></g><g stroke="#222" stroke-width="0.8"><path d="M3.4,12.6 L5,13 M4.6,8.6 L6,9.4 M7,5.6 L8,6.8 M10.2,3.6 L10.8,5 M13.4,3 V4.6 M16.6,3.6 L16,5 M19.8,5.6 L18.8,6.8 M22.2,8.6 L20.8,9.4 M23.4,12.6 L21.8,13"/></g></svg>
<svg class="abs" style="left:2363.6px;top:1229px" width="20" height="19" viewBox="0 0 20 19" ><g fill="none" stroke="#222"><path d="M3,1.6 H16.6" stroke-width="1.6"/><path d="M9.8,1.6 V16" stroke-width="1.8"/><path d="M1,17.6 H18.6" stroke-width="2"/><path d="M4,2 L1.6,11.6 H6.6 Z M15.6,2 L13.2,11.6 H18.2 Z" stroke-width="1.2" stroke-linejoin="round"/></g><path d="M1.4,11.4 H6.8 V13 H1.4 Z M13,11.4 H18.4 V13 H13 Z" fill="#222"/></svg>
<div class="abs" style="left:50px;top:1255.6px;width:2348px;height:37px;background:#d7d7d7"></div>
<div class="abs" style="left:50px;top:1255.6px;width:43px;height:35px;background:#d2d2d2"></div>
<svg class="abs" style="left:60px;top:1264px" width="21" height="21" viewBox="0 0 21 21" ><path d="M10.5,1 V20 M1,10.5 H20" stroke="#666" stroke-width="3.2"/></svg>
<svg class="abs" style="left:93px;top:1256px" width="205" height="34" viewBox="0 0 205 34" ><polygon points="0,0 42,0 52.4,16.8 42,34 0,34" fill="#e9e9e9"/><polygon points="42,0 188.6,0 198.8,16.8 188.6,34 42,34 52.4,16.8" fill="#fff"/><path d="M22.4,4.4 L34.4,15.6 V27 H26 V19.6 H19.2 V27 H10.8 V15.6 Z" fill="#666"/><rect x="28.6" y="5.6" width="3.4" height="6" fill="#666"/><path d="M65.4,7.8 H72.4 L74.2,9.8 H86 V23.4 H65.4 Z" fill="none" stroke="#444" stroke-width="1.3" stroke-linejoin="round"/></svg>
<div class="abs t " style="left:188.2px;top:1263.28px;font-size:16.8px;line-height:19.30px;color:#7a7a7a;font-weight:normal;white-space:nowrap;letter-spacing:-0.003px;">Exercise 3</div>
<div class="abs" style="left:294.6px;top:1256px;width:250.8px;height:34px;background:#e6e6e6;border-radius:0 0 5px 5px"></div>
<svg class="abs" style="left:307px;top:1260px" width="25" height="25" viewBox="0 0 25 25" ><g stroke="#333" stroke-width="1.2" stroke-linejoin="round"><path d="M1.2,1 H16.6 L23.4,5.4 V23.6 H8 L1.2,18.6 Z" fill="#fff"/><path d="M1.2,1 L8,5.8 H23.4 M8,5.8 V23.6" fill="none"/><path d="M1.6,1.6 H12.6 L16.4,4.2 V15 H5.6 L1.6,12 Z" fill="#909090"/><path d="M1.6,1.6 L5.6,4.6 H16.4 M5.6,4.6 V15" fill="none" stroke-width="0.9"/></g></svg>
<div class="abs t " style="left:336.6px;top:1264.69px;font-size:17px;line-height:19.53px;color:#7a7a7a;font-weight:normal;white-space:nowrap;letter-spacing:0.143px;">Exercise 3 Assembly</div>
<div class="abs" style="left:547.2px;top:1256px;width:249.8px;height:34.2px;background:#fff;border-radius:0 0 5px 5px;border-bottom:2.2px solid #174c9c;box-sizing:border-box"></div>
<svg class="abs" style="left:562px;top:1260px" width="23" height="25" viewBox="0 0 23 25" ><g fill="#fff" stroke="#333" stroke-width="1.2" stroke-linejoin="round"><path d="M1,8.8 L4,6.6 H9.4 V21.4 L6.4,23.6 H1 Z"/><path d="M1,8.8 H6.4 V23.6 M6.4,8.8 L9.4,6.6" fill="none"/><path d="M10.4,3.2 L13.4,1 H18.8 L21.4,3.2 V21.4 L18.4,23.6 H10.4 Z"/><path d="M10.4,3.2 H18.4 V23.6 M18.4,3.2 L21.4,1.2" fill="none"/></g></svg>
<div class="abs t " style="left:589.2px;top:1264.69px;font-size:17px;line-height:19.53px;color:#555;font-weight:normal;white-space:nowrap;letter-spacing:-0.009px;">Exercise 3 Part Studio</div>
<div class="abs" style="left:0;top:1292.6px;width:2398px;height:2px;background:#555;z-index:50"></div>
<svg class="abs" style="left:0px;top:1284px" width="10" height="10" viewBox="0 0 10 10"><path d="M0,1 C0.4,6 3.4,9 9,9.2 L0,9.6 Z" fill="#555"/></svg>
<svg class="abs" style="z-index:60;left:2388px;top:1282px" width="10" height="12" viewBox="0 0 10 12" ><path d="M10,2 C9.6,8 6.6,10.6 1,10.8 L10,11.4 Z" fill="#555"/></svg>
</body></html>
